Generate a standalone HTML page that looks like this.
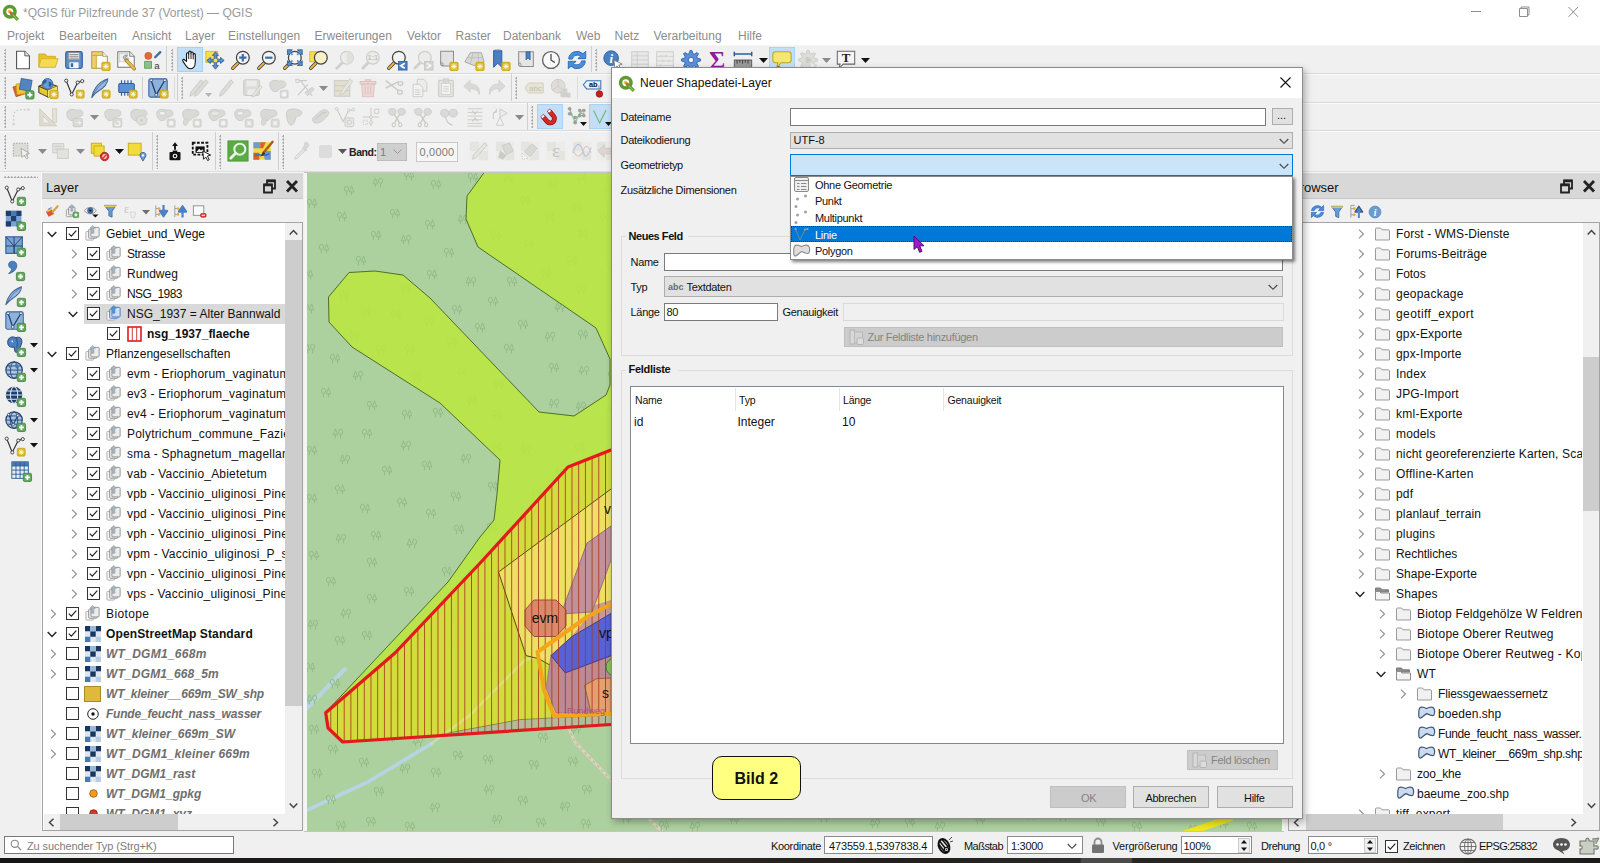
<!DOCTYPE html><html lang="de"><head><meta charset="utf-8"><title>QGIS für Pilzfreunde 37 (Vortest) — QGIS</title><style>
*{box-sizing:border-box}
html,body{margin:0;padding:0}
body{width:1600px;height:863px;overflow:hidden;background:#f0f0f0;position:relative;font-family:"Liberation Sans",sans-serif;font-size:12px;color:#111}
.b{position:absolute}
.t{position:absolute;white-space:nowrap}
.ic{position:absolute;overflow:visible}
.menu{color:#8c8c8c}
.bi{font-weight:bold;font-style:italic;color:#6e6e6e}
.bd{font-weight:bold}
.d11{font-size:11px;letter-spacing:-.3px}
.inp{background:#fff;border:1px solid #7a7a7a}
.cmb{background:#e1e1e1;border:1px solid #adadad}
.btn{background:#e1e1e1;border:1px solid #adadad;text-align:center}
.btnd{background:#cccccc;border:1px solid #bfbfbf;text-align:center;color:#838383}
.sep{position:absolute;width:1px;background:#cfcfcf}
.clip{position:absolute;overflow:hidden}
</style></head><body>
<div class="b " style="left:0px;top:0px;width:1600px;height:45px;background:#fff"></div>
<svg class="ic" style="left:2px;top:4px" width="17" height="17" viewBox="0 0 24 24"><circle cx="11" cy="11" r="7.4" fill="none" stroke="#5d9a33" stroke-width="5"/><path d="M12 12L22.5 22.5" stroke="#5d9a33" stroke-width="4.6"/><path d="M12.5 12.5L22 22" stroke="#8fc457" stroke-width="1.6"/><circle cx="10.5" cy="10.5" r="2.4" fill="#f0b73a"/><path d="M11 11L15 15" stroke="#e0562c" stroke-width="2"/></svg>
<div class="t " style="left:23px;top:2.7px;height:20px;line-height:20px;color:#9a9a9a">*QGIS für Pilzfreunde 37 (Vortest) — QGIS</div>
<svg class="ic" style="left:1460px;top:0" width="140" height="26" viewBox="0 0 140 26"><path d="M11 11.500H21M59.500 8.500V16.500H67.500V8.500ZM61 8.500V7H69V15H67.500M108.500 7L118 16.800M118 7L108.500 16.800" fill="none" stroke="#8e8e8e" stroke-width="1"/></svg>
<div class="t menu" style="left:7px;top:25.5px;height:20px;line-height:20px;">Projekt</div>
<div class="t menu" style="left:59px;top:25.5px;height:20px;line-height:20px;">Bearbeiten</div>
<div class="t menu" style="left:132px;top:25.5px;height:20px;line-height:20px;">Ansicht</div>
<div class="t menu" style="left:185px;top:25.5px;height:20px;line-height:20px;">Layer</div>
<div class="t menu" style="left:228px;top:25.5px;height:20px;line-height:20px;">Einstellungen</div>
<div class="t menu" style="left:314.5px;top:25.5px;height:20px;line-height:20px;">Erweiterungen</div>
<div class="t menu" style="left:407px;top:25.5px;height:20px;line-height:20px;">Vektor</div>
<div class="t menu" style="left:455.5px;top:25.5px;height:20px;line-height:20px;">Raster</div>
<div class="t menu" style="left:503px;top:25.5px;height:20px;line-height:20px;">Datenbank</div>
<div class="t menu" style="left:576px;top:25.5px;height:20px;line-height:20px;">Web</div>
<div class="t menu" style="left:614.5px;top:25.5px;height:20px;line-height:20px;">Netz</div>
<div class="t menu" style="left:653.5px;top:25.5px;height:20px;line-height:20px;">Verarbeitung</div>
<div class="t menu" style="left:738px;top:25.5px;height:20px;line-height:20px;">Hilfe</div>
<div class="b " style="left:0px;top:73px;width:1600px;height:1px;background:#d9d9d9"></div>
<div class="b " style="left:0px;top:74px;width:1600px;height:1px;background:#fbfbfb"></div>
<div class="b " style="left:0px;top:101.5px;width:1600px;height:1px;background:#d9d9d9"></div>
<div class="b " style="left:0px;top:102.5px;width:1600px;height:1px;background:#fbfbfb"></div>
<div class="b " style="left:0px;top:130px;width:1600px;height:1px;background:#d9d9d9"></div>
<div class="b " style="left:0px;top:131px;width:1600px;height:1px;background:#fbfbfb"></div>
<div class="b " style="left:0px;top:170.5px;width:1600px;height:1px;background:#dcdcdc"></div>
<div class="b " style="left:0px;top:171.5px;width:1600px;height:1px;background:#f8f8f8"></div>
<div class="b " style="left:0px;top:45px;width:1600px;height:1px;background:#f6f6f6"></div>
<div class="b hd" style="left:3px;top:49px;width:4px;height:22px;background-image:radial-gradient(circle at 2.300px 1.200px,#a4a4a4 0.8px,transparent 1.15px);background-size:4px 3.300px"></div>
<svg class="ic" style="left:11.5px;top:49px;" width="22" height="22" viewBox="0 0 24 24"><path d="M5 2.5H14L19 7.5V21.5H5Z" fill="#fff" stroke="#555" stroke-width="1.2"/><path d="M14 2.5V7.5H19" fill="#e4e4e4" stroke="#555" stroke-width="1"/></svg>
<svg class="ic" style="left:37px;top:49px;" width="22" height="22" viewBox="0 0 24 24"><path d="M2 5.5H9L11 8H20V19.5H2Z" fill="#e9c32f" stroke="#d1a91a" stroke-width="1"/><path d="M4.5 10.5H23L20 20H2Z" fill="#f6d953" stroke="#dcb525" stroke-width="1"/></svg>
<svg class="ic" style="left:63px;top:49px;" width="22" height="22" viewBox="0 0 24 24"><rect x="3" y="3" width="18" height="18" rx="2" fill="#5f8fc6" stroke="#38669c" stroke-width="1.4"/><rect x="6" y="4" width="12" height="7.5" fill="#e8e8e8" stroke="#8a8a8a" stroke-width=".6"/><path d="M7 6H17M7 8H17M7 10H17" stroke="#777" stroke-width=".8"/><rect x="7" y="14.5" width="10" height="6.5" fill="#f4f4f4"/><rect x="8.5" y="15.5" width="2.6" height="4.2" fill="#38669c"/></svg>
<svg class="ic" style="left:89px;top:49px;" width="22" height="22" viewBox="0 0 24 24"><path d="M3 3H15L20 8V21H3Z" fill="#fbfbf6" stroke="#9a8a55" stroke-width="1"/><path d="M3 3H8V21H3Z" fill="#ecd070" stroke="#c7a633" stroke-width="1"/><path d="M3 3H15V7H3Z" fill="#ecd070" stroke="#c7a633" stroke-width="1"/><path d="M15 3V8H20" fill="#eee" stroke="#9a8a55" stroke-width=".8"/><g transform="translate(14,14.5)"><rect width="9" height="9" rx="1.2" fill="#dcbc2a" stroke="#c9a91a" stroke-width="1"/><path d="M4.5 1.4V7.6M1.4 4.5H7.6M2.2 2.2L6.8 6.8M6.8 2.2L2.2 6.8" stroke="#fffdf0" stroke-width="1" fill="none"/></g></svg>
<svg class="ic" style="left:115px;top:49px;" width="22" height="22" viewBox="0 0 24 24"><path d="M3 3H16L21 8V20H3Z" fill="#fbfbfb" stroke="#777" stroke-width="1.1"/><path d="M16 3V8H21" fill="#e6e6e6" stroke="#777" stroke-width=".9"/><rect x="5" y="5" width="9" height="9" fill="#f0f0f0" stroke="#bbb" stroke-width=".6"/><path d="M9 9.5A3 3 0 0 1 13.5 7L11.6 9L12.6 11L14.8 10.6A3 3 0 0 1 11.4 13L9 9.5Z" fill="#bdbdbd" stroke="#777" stroke-width=".7"/><path d="M12.5 12.5L21 21.5" stroke="#b08a2a" stroke-width="4" stroke-linecap="round"/><path d="M13 13L20.8 21.2" stroke="#e6c04f" stroke-width="2.2" stroke-linecap="round"/></svg>
<svg class="ic" style="left:141px;top:49px;" width="22" height="22" viewBox="0 0 24 24"><circle cx="8" cy="7.500" r="3.900" fill="#e06a38" stroke="#c8552a" stroke-width=".6"/><rect x="4" y="13.500" width="7.500" height="7.500" fill="#8cc08a" stroke="#5a9a58" stroke-width=".9"/><path d="M15.5 9L21 3.5" stroke="#3c6fa8" stroke-width="2.6" stroke-linecap="round"/><text x="14.5" y="21.5" font-family="Liberation Sans,sans-serif" font-size="10.5" fill="#333">a</text></svg>
<div class="sep" style="left:166px;top:46px;height:26px"></div>
<div class="b hd" style="left:170px;top:49px;width:4px;height:22px;background-image:radial-gradient(circle at 2.300px 1.200px,#a4a4a4 0.8px,transparent 1.15px);background-size:4px 3.300px"></div>
<div class="b " style="left:177px;top:47px;width:26px;height:25px;background:#c4dff5;border:1px solid #a9d1f2"></div>
<svg class="ic" style="left:179px;top:49px;" width="22" height="22" viewBox="0 0 24 24"><path d="M8.2 13.5V5.6C8.2 3.6 10.6 3.6 10.6 5.6V3.8C10.6 1.8 13.1 1.8 13.1 3.8V4.6C13.1 2.8 15.5 2.8 15.5 4.8V6.2C15.5 4.6 17.8 4.6 17.8 6.6V14C17.8 18 16 21.5 12.6 21.5C9.6 21.5 8.4 19.8 6.8 17.2L4.2 13.2C3.4 11.6 5.2 10.6 6.4 12.1Z" fill="#fff" stroke="#111" stroke-width="1.2" stroke-linejoin="round"/><path d="M10.6 5.6V11M13.1 4.6V11M15.5 6.2V11.3" stroke="#111" stroke-width="1" fill="none"/></svg>
<svg class="ic" style="left:204px;top:49px;" width="22" height="22" viewBox="0 0 24 24"><rect x="2" y="2.500" width="13" height="12" fill="#f2e04c" stroke="#c9b21a" stroke-width=".8"/><path d="M12.500 3L15.800 7H13.800V11.200H18V9.200L22 12.500L18 15.800V13.800H13.800V18H15.800L12.500 22L9.200 18H11.200V13.800H7V15.800L3 12.500L7 9.200V11.200H11.200V7H9.200Z" fill="#5b8fce" stroke="#2d5d99" stroke-width=".9" stroke-linejoin="round"/><rect x="10.700" y="10.700" width="3.600" height="3.600" fill="#f2e04c"/></svg>
<svg class="ic" style="left:230px;top:49px;" width="22" height="22" viewBox="0 0 24 24"><path d="M3 21L9.5 14.5" stroke="#3a3a3a" stroke-width="3.6" stroke-linecap="round"/><path d="M3 21L9 15" stroke="#e8b83a" stroke-width="2" stroke-linecap="round"/><circle cx="14" cy="9.5" r="7" fill="#f4f4f4" stroke="#444" stroke-width="1.4"/><path d="M14 5.5V13.5M10 9.5H18" stroke="#3b6fb0" stroke-width="2.4"/></svg>
<svg class="ic" style="left:256px;top:49px;" width="22" height="22" viewBox="0 0 24 24"><path d="M3 21L9.5 14.5" stroke="#3a3a3a" stroke-width="3.6" stroke-linecap="round"/><path d="M3 21L9 15" stroke="#e8b83a" stroke-width="2" stroke-linecap="round"/><circle cx="14" cy="9.5" r="7" fill="#f4f4f4" stroke="#444" stroke-width="1.4"/><path d="M10 9.5H18" stroke="#3b6fb0" stroke-width="2.4"/></svg>
<svg class="ic" style="left:282px;top:49px;" width="22" height="22" viewBox="0 0 24 24"><path d="M3 21L9.5 14.5" stroke="#3a3a3a" stroke-width="3.6" stroke-linecap="round"/><path d="M3 21L9 15" stroke="#e8b83a" stroke-width="2" stroke-linecap="round"/><circle cx="14" cy="9.5" r="7" fill="#f4f4f4" stroke="#444" stroke-width="1.4"/><path d="M6 1H11L6 6ZM22 1H17L22 6ZM6 18H11L6 13ZM22 18H17L22 13Z" fill="#5b8fce" stroke="#3a6fb0" stroke-width="1.2" stroke-linejoin="round"/><path d="M7 2L11.5 6.5M21 2L16.5 6.5M7 17L11.5 12.5M21 17L16.5 12.5" stroke="#5b8fce" stroke-width="1.8"/></svg>
<svg class="ic" style="left:308px;top:49px;" width="22" height="22" viewBox="0 0 24 24"><rect x="2" y="3" width="9" height="11" fill="#f2e04c" stroke="#c9b21a" stroke-width=".8"/><path d="M3 21L9.5 14.5" stroke="#3a3a3a" stroke-width="3.6" stroke-linecap="round"/><path d="M3 21L9 15" stroke="#e8b83a" stroke-width="2" stroke-linecap="round"/><circle cx="14" cy="9.5" r="7" fill="#f7f1c8" stroke="#444" stroke-width="1.4"/></svg>
<svg class="ic" style="left:334px;top:49px;" width="22" height="22" viewBox="0 0 24 24"><path d="M3 21L9.5 14.5" stroke="#cfcfcb" stroke-width="3" stroke-linecap="round"/><circle cx="14" cy="9.5" r="7" fill="#ececea" stroke="#cfcfcb" stroke-width="1.4"/><path d="M14 2.5A7 7 0 0 1 14 16.5Z" fill="#e0e0dc"/></svg>
<svg class="ic" style="left:360px;top:49px;" width="22" height="22" viewBox="0 0 24 24"><path d="M3 21L9.5 14.5" stroke="#cfcfcb" stroke-width="3" stroke-linecap="round"/><circle cx="14" cy="9.5" r="7" fill="#ececea" stroke="#cfcfcb" stroke-width="1.4"/><text x="14" y="12.5" text-anchor="middle" font-family="Liberation Sans,sans-serif" font-size="8" font-weight="bold" fill="#c4c4c0">1:1</text></svg>
<svg class="ic" style="left:386px;top:49px;" width="22" height="22" viewBox="0 0 24 24"><path d="M3 21L9.5 14.5" stroke="#3a3a3a" stroke-width="3.6" stroke-linecap="round"/><path d="M3 21L9 15" stroke="#e8b83a" stroke-width="2" stroke-linecap="round"/><circle cx="14" cy="9.5" r="7" fill="#f4f4f4" stroke="#444" stroke-width="1.4"/><rect x="13.5" y="13.5" width="9.5" height="9.5" fill="#4a7fc1" stroke="#2d5d99" stroke-width=".8"/><path d="M20.5 15.5L16 18.2L20.5 21" stroke="#fff" stroke-width="1.8" fill="none"/></svg>
<svg class="ic" style="left:412px;top:49px;" width="22" height="22" viewBox="0 0 24 24"><path d="M3 21L9.5 14.5" stroke="#cfcfcb" stroke-width="3" stroke-linecap="round"/><circle cx="14" cy="9.5" r="7" fill="#ececea" stroke="#cfcfcb" stroke-width="1.4"/><rect x="13.5" y="13.5" width="9.5" height="9.5" fill="#d4d4d0" stroke="#c4c4c0" stroke-width=".8"/><path d="M16 15.5L20.5 18.2L16 21" stroke="#f4f4f4" stroke-width="1.8" fill="none"/></svg>
<svg class="ic" style="left:437px;top:49px;" width="22" height="22" viewBox="0 0 24 24"><path d="M4 2.5H18V18.5H6.5C5 18.5 4 17.6 4 16Z" fill="#e2e2e0" stroke="#8c8c8a" stroke-width="1.1"/><path d="M4 16C4 14.6 6.5 14.6 6.5 16V18.5" fill="none" stroke="#8c8c8a" stroke-width="1"/><g transform="translate(14,14.5)"><rect width="9" height="9" rx="1.2" fill="#dcbc2a" stroke="#c9a91a" stroke-width="1"/><path d="M4.5 1.4V7.6M1.4 4.5H7.6M2.2 2.2L6.8 6.8M6.8 2.2L2.2 6.8" stroke="#fffdf0" stroke-width="1" fill="none"/></g></svg>
<svg class="ic" style="left:463px;top:49px;" width="22" height="22" viewBox="0 0 24 24"><path d="M2 14L8 4H20L23 14L12 18Z" fill="#d9d9d6" stroke="#a4a4a0" stroke-width="1"/><path d="M5 9.5H21.5M11 4L8 16.5M16 4L17.5 16" stroke="#b8b8b4" stroke-width=".8" fill="none"/><g transform="translate(14,14.5)"><rect width="9" height="9" rx="1.2" fill="#dcbc2a" stroke="#c9a91a" stroke-width="1"/><path d="M4.5 1.4V7.6M1.4 4.5H7.6M2.2 2.2L6.8 6.8M6.8 2.2L2.2 6.8" stroke="#fffdf0" stroke-width="1" fill="none"/></g></svg>
<svg class="ic" style="left:489px;top:49px;" width="22" height="22" viewBox="0 0 24 24"><path d="M5 2H14V20L9.5 15.5L5 20Z" fill="#4a7fc1" stroke="#2d5d99" stroke-width="1"/><path d="M5 2C5 .8 14 .8 14 2" fill="#8ab0dc" stroke="#2d5d99" stroke-width=".8"/><g transform="translate(14,14.5)"><rect width="9" height="9" rx="1.2" fill="#dcbc2a" stroke="#c9a91a" stroke-width="1"/><path d="M4.5 1.4V7.6M1.4 4.5H7.6M2.2 2.2L6.8 6.8M6.8 2.2L2.2 6.8" stroke="#fffdf0" stroke-width="1" fill="none"/></g></svg>
<svg class="ic" style="left:515px;top:49px;" width="22" height="22" viewBox="0 0 24 24"><path d="M4 3H20V19H6.5C5 19 4 18 4 16.5Z" fill="#e6e6e4" stroke="#8c8c8a" stroke-width="1.1"/><path d="M4 16.5C4 15 6.5 15 6.5 16.5V19" fill="none" stroke="#8c8c8a" stroke-width="1"/><path d="M12 3H16.5V12L14.2 9.8L12 12Z" fill="#4a7fc1" stroke="#2d5d99" stroke-width=".8"/></svg>
<svg class="ic" style="left:540px;top:49px;" width="22" height="22" viewBox="0 0 24 24"><circle cx="12" cy="12" r="9.2" fill="#fafafa" stroke="#666" stroke-width="1.5"/><path d="M12 5.5V12L16.2 14.8" stroke="#555" stroke-width="1.5" fill="none"/></svg>
<svg class="ic" style="left:566px;top:49px;" width="22" height="22" viewBox="0 0 24 24"><path d="M3 11A9 8.5 0 0 1 18.5 5.2L21.5 2.5V10.5H13L16 7.8A5.6 5.2 0 0 0 7 11Z" fill="#4a8fdc" stroke="#2565b5" stroke-width="1"/><path d="M21 13A9 8.5 0 0 1 5.5 18.8L2.5 21.5V13.5H11L8 16.2A5.6 5.2 0 0 0 17 13Z" fill="#4a8fdc" stroke="#2565b5" stroke-width="1"/></svg>
<div class="sep" style="left:591px;top:46px;height:26px"></div>
<div class="b hd" style="left:594px;top:49px;width:4px;height:22px;background-image:radial-gradient(circle at 2.300px 1.200px,#a4a4a4 0.8px,transparent 1.15px);background-size:4px 3.300px"></div>
<div class="b " style="left:769px;top:47px;width:26px;height:25px;background:#c4dff5;border:1px solid #a9d1f2"></div>
<svg class="ic" style="left:602px;top:49px;" width="22" height="22" viewBox="0 0 24 24"><circle cx="10" cy="10" r="8" fill="#4a7fc1" stroke="#2d5d99" stroke-width="1"/><text x="10" y="15" text-anchor="middle" font-family="Liberation Serif,serif" font-style="italic" font-weight="bold" font-size="14" fill="#fff">i</text><path d="M13 12L22 16.5L18.3 17.6L20.5 21.5L18.6 22.5L16.5 18.6L14 21.2Z" fill="#fff" stroke="#666" stroke-width=".8"/></svg>
<svg class="ic" style="left:629px;top:49px;" width="22" height="22" viewBox="0 0 24 24"><rect x="3" y="3" width="18" height="18" fill="#e8e8e6" stroke="#cacac7" stroke-width="1"/><path d="M3 7.5H21M3 12H21M3 16.5H21M9 3V21" stroke="#cacac7" stroke-width="1"/></svg>
<svg class="ic" style="left:654px;top:49px;" width="22" height="22" viewBox="0 0 24 24"><rect x="3" y="3" width="18" height="18" fill="#ececea" stroke="#cacac7" stroke-width="1"/><path d="M3 8H21M3 13H21M3 18H21" stroke="#cacac7" stroke-width=".8"/><circle cx="8" cy="8" r="1.6" fill="#d9d9d6"/><circle cx="13" cy="8" r="1.6" fill="#d9d9d6"/><circle cx="10" cy="13" r="1.6" fill="#d9d9d6"/><circle cx="16" cy="13" r="1.6" fill="#d9d9d6"/><circle cx="7" cy="18" r="1.6" fill="#d9d9d6"/></svg>
<svg class="ic" style="left:680px;top:49px;" width="22" height="22" viewBox="0 0 24 24"><path d="M22.4 11.0L22.4 13.0L18.9 14.1L18.3 15.4L20.1 18.7L18.7 20.1L15.4 18.3L14.1 18.9L13.0 22.4L11.0 22.4L9.9 18.9L8.6 18.3L5.3 20.1L3.9 18.7L5.7 15.4L5.1 14.1L1.6 13.0L1.6 11.0L5.1 9.9L5.7 8.6L3.9 5.3L5.3 3.9L8.6 5.7L9.9 5.1L11.0 1.6L13.0 1.6L14.1 5.1L15.4 5.7L18.7 3.9L20.1 5.3L18.3 8.6L18.9 9.9Z" fill="#5b8fd6" stroke="#2f62ad" stroke-width="1" stroke-linejoin="round"/><circle cx="12" cy="12" r="3" fill="#f0f0f0" stroke="#2f62ad" stroke-width="1"/></svg>
<svg class="ic" style="left:706px;top:49px;" width="22" height="22" viewBox="0 0 24 24"><text x="12" y="21.5" text-anchor="middle" font-family="Liberation Serif,serif" font-weight="bold" font-size="27" fill="#8f1a96">Σ</text></svg>
<svg class="ic" style="left:732px;top:49px;" width="22" height="22" viewBox="0 0 24 24"><path d="M2.5 5.5H21.5M2.5 3V8M21.5 3V8" stroke="#2d5d99" stroke-width="1.6" fill="none"/><rect x="2.5" y="12" width="19" height="8.5" fill="#9a9a98" stroke="#555" stroke-width="1"/><path d="M5.5 12V16M8.5 12V15M11.5 12V16M14.5 12V15M17.5 12V16" stroke="#333" stroke-width=".9"/></svg>
<svg class="ic" style="left:771px;top:49px;" width="22" height="22" viewBox="0 0 24 24"><path d="M5 3H19C21 3 22 4.2 22 6V12C22 13.8 21 15 19 15H11L6 20.5L7.5 15H5C3 15 2 13.8 2 12V6C2 4.2 3 3 5 3Z" fill="#f5e66e" stroke="#b9a526" stroke-width="1.1"/><path d="M5.5 22C6 19.5 8.5 18.6 10 20" stroke="#5a8a3a" stroke-width="1.6" fill="none"/></svg>
<svg class="ic" style="left:797px;top:49px;" width="22" height="22" viewBox="0 0 24 24"><path d="M22.4 11.0L22.4 13.0L18.9 14.1L18.3 15.4L20.1 18.7L18.7 20.1L15.4 18.3L14.1 18.9L13.0 22.4L11.0 22.4L9.9 18.9L8.6 18.3L5.3 20.1L3.9 18.7L5.7 15.4L5.1 14.1L1.6 13.0L1.6 11.0L5.1 9.9L5.7 8.6L3.9 5.3L5.3 3.9L8.6 5.7L9.9 5.1L11.0 1.6L13.0 1.6L14.1 5.1L15.4 5.7L18.7 3.9L20.1 5.3L18.3 8.6L18.9 9.9Z" fill="#dcdcd8" stroke="#cacac6" stroke-width="1" stroke-linejoin="round"/><circle cx="12" cy="12" r="3" fill="#f0f0f0" stroke="#cacac6" stroke-width="1"/><path d="M10 8.5L16 12L10 15.5Z" fill="#c8c8c4"/><path d="M14 14L22 18L18.5 19L20.5 22.5L19 23.2L17 19.8L14.8 22Z" fill="#eee" stroke="#cacac7" stroke-width=".7"/></svg>
<svg class="ic" style="left:835px;top:49px;" width="22" height="22" viewBox="0 0 24 24"><path d="M2.5 2.5H21.5V16.5H9L4.5 21L5.5 16.5H2.5Z" fill="#f4f4f4" stroke="#666" stroke-width="1.1"/><text x="12" y="14.3" text-anchor="middle" font-family="Liberation Serif,serif" font-weight="bold" font-size="14" fill="#222">T</text></svg>
<svg class="ic" style="left:758.5px;top:57.5px" width="9" height="5" viewBox="0 0 9 5"><path d="M0 0H9L4.5 5Z" fill="#111"/></svg>
<svg class="ic" style="left:821.5px;top:57.5px" width="9" height="5" viewBox="0 0 9 5"><path d="M0 0H9L4.5 5Z" fill="#8a8a8a"/></svg>
<svg class="ic" style="left:860.5px;top:57.5px" width="9" height="5" viewBox="0 0 9 5"><path d="M0 0H9L4.5 5Z" fill="#111"/></svg>
<div class="b hd" style="left:3px;top:77px;width:4px;height:22px;background-image:radial-gradient(circle at 2.300px 1.200px,#a4a4a4 0.8px,transparent 1.15px);background-size:4px 3.300px"></div>
<svg class="ic" style="left:12px;top:77px;" width="22" height="22" viewBox="0 0 24 24"><rect x="2.5" y="9" width="11" height="11" fill="#d9652b" stroke="#b14d1b" stroke-width=".8" transform="rotate(-18 8 14.5)"/><rect x="5" y="7" width="11.5" height="11.5" fill="#f0c33a" stroke="#c9a01c" stroke-width=".8" transform="rotate(-6 11 13)"/><rect x="9" y="2.5" width="12" height="12" fill="#5284c2" stroke="#2d5d99" stroke-width=".8" transform="rotate(10 15 8.5)"/><g transform="translate(15.0,15.0)"><rect width="9" height="9" rx="1.5" fill="#64a75f" stroke="#4a8a46" stroke-width="1"/><path d="M4.5 1.8V7.2M1.8 4.5H7.2" stroke="#fff" stroke-width="2" fill="none"/></g></svg>
<svg class="ic" style="left:37px;top:77px;" width="22" height="22" viewBox="0 0 24 24"><path d="M2 10L11 6L22 10V17L12 22L2 17Z" fill="#e6c82f" stroke="#3a3a3a" stroke-width="1.1" stroke-linejoin="round"/><path d="M2 10L12 14.5L22 10M12 14.5V22" fill="none" stroke="#3a3a3a" stroke-width="1.1"/><path d="M12 14.5L22 10V17L12 22Z" fill="#f6e46a"/><circle cx="11.5" cy="7.5" r="5.8" fill="#6c9bd2" stroke="#2d5d99" stroke-width="1"/><path d="M7 4C9 2.500 11 3 10.500 5C10 7 8 6.500 7.500 8.500C6.500 8 6 5.500 7 4ZM12.500 5.500C14 4.500 16.500 5.500 16 8C15.500 10 14 11.500 13 10.500C12.500 9 13.500 8 12.500 5.500Z" fill="#2d5d99"/><g transform="translate(14,14.5)"><rect width="9" height="9" rx="1.2" fill="#dcbc2a" stroke="#c9a91a" stroke-width="1"/><path d="M4.5 1.4V7.6M1.4 4.5H7.6M2.2 2.2L6.8 6.8M6.8 2.2L2.2 6.8" stroke="#fffdf0" stroke-width="1" fill="none"/></g></svg>
<svg class="ic" style="left:63px;top:77px;" width="22" height="22" viewBox="0 0 24 24"><path d="M3.5 4L9.5 19L16 6L21 4.5" fill="none" stroke="#333" stroke-width="1.3"/><circle cx="3.5" cy="4" r="1.7" fill="#fff" stroke="#333" stroke-width="1"/><circle cx="9.5" cy="19" r="1.7" fill="#fff" stroke="#333" stroke-width="1"/><circle cx="16" cy="6" r="1.7" fill="#fff" stroke="#333" stroke-width="1"/><circle cx="21" cy="4.5" r="1.7" fill="#fff" stroke="#333" stroke-width="1"/><g transform="translate(14.5,14.5)"><rect width="8.5" height="8.5" rx="1.2" fill="#dcbc2a" stroke="#c9a91a" stroke-width="1"/><path d="M4.25 1.4V7.1M1.4 4.25H7.1M2.2 2.2L6.3 6.3M6.3 2.2L2.2 6.3" stroke="#fffdf0" stroke-width="1" fill="none"/></g></svg>
<svg class="ic" style="left:89px;top:77px;" width="22" height="22" viewBox="0 0 24 24"><path d="M3 22.500C4 15 9 6 20.500 2C20.500 6 18 11 10 15.500C8 16.500 6 18 3 22.500Z" fill="#9bb9de" stroke="#3d6495" stroke-width="1.100" stroke-linejoin="round"/><path d="M3.500 21.500C7 14 12 8 19.500 3" stroke="#3d6495" stroke-width=".8" fill="none"/><g transform="translate(14.5,14.5)"><rect width="8.5" height="8.5" rx="1.2" fill="#dcbc2a" stroke="#c9a91a" stroke-width="1"/><path d="M4.25 1.4V7.1M1.4 4.25H7.1M2.2 2.2L6.3 6.3M6.3 2.2L2.2 6.3" stroke="#fffdf0" stroke-width="1" fill="none"/></g></svg>
<svg class="ic" style="left:116px;top:77px;" width="22" height="22" viewBox="0 0 24 24"><rect x="3" y="7" width="17" height="10" rx="1.5" fill="#5b8fd6" stroke="#2d5d99" stroke-width="1.1"/><path d="M6 7V3.5M9.5 7V3.5M13 7V3.5M16.5 7V3.5M6 17V20.5M9.5 17V20.5M13 17V20.5" stroke="#2d5d99" stroke-width="1.3"/><g transform="translate(14.5,14.5)"><rect width="8.5" height="8.5" rx="1.2" fill="#dcbc2a" stroke="#c9a91a" stroke-width="1"/><path d="M4.25 1.4V7.1M1.4 4.25H7.1M2.2 2.2L6.3 6.3M6.3 2.2L2.2 6.3" stroke="#fffdf0" stroke-width="1" fill="none"/></g></svg>
<svg class="ic" style="left:147px;top:77px;" width="22" height="22" viewBox="0 0 24 24"><rect x="2" y="2" width="20" height="20" rx="2" fill="#8fb2dc" stroke="#3a6aa6" stroke-width="1.2"/><path d="M4.5 3.5L10 19.5L19.5 3.5" fill="none" stroke="#1f3f6a" stroke-width="1.4"/><circle cx="4.5" cy="3.5" r="1.5" fill="#fff" stroke="#1f3f6a" stroke-width=".8"/><circle cx="10" cy="19.5" r="1.5" fill="#fff" stroke="#1f3f6a" stroke-width=".8"/><circle cx="19.5" cy="3.5" r="1.5" fill="#fff" stroke="#1f3f6a" stroke-width=".8"/><g transform="translate(14.5,14.5)"><rect width="8.5" height="8.5" rx="1.2" fill="#dcbc2a" stroke="#c9a91a" stroke-width="1"/><path d="M4.25 1.4V7.1M1.4 4.25H7.1M2.2 2.2L6.3 6.3M6.3 2.2L2.2 6.3" stroke="#fffdf0" stroke-width="1" fill="none"/></g></svg>
<div class="sep" style="left:142px;top:77px;height:22px"></div>
<div class="sep" style="left:174px;top:77px;height:22px;background:#dcdcdc"></div>
<div class="sep" style="left:177px;top:74px;height:27px"></div>
<div class="b hd" style="left:180px;top:77px;width:4px;height:22px;background-image:radial-gradient(circle at 2.300px 1.200px,#a4a4a4 0.8px,transparent 1.15px);background-size:4px 3.300px"></div>
<svg class="ic" style="left:189px;top:77px;" width="22" height="22" viewBox="0 0 24 24"><path d="M13 3L16 5.5L5 19L1 21L2 16.5Z" fill="#dcdcd8" stroke="#cacac7" stroke-width="1" stroke-linejoin="round"/><path d="M18 3L21 5.5L10 19L6 21L7 16.5Z" fill="#dcdcd8" stroke="#cacac7" stroke-width="1" stroke-linejoin="round"/></svg>
<svg class="ic" style="left:215px;top:77px;" width="22" height="22" viewBox="0 0 24 24"><path d="M17 3L20 5.5L9 19L5 21L6 16.5Z" fill="#dcdcd8" stroke="#cacac7" stroke-width="1" stroke-linejoin="round"/></svg>
<svg class="ic" style="left:241px;top:77px;" width="22" height="22" viewBox="0 0 24 24"><rect x="3" y="3" width="17" height="17" rx="2" fill="#dcdcd8" stroke="#cacac7" stroke-width="1.2"/><rect x="6" y="4" width="11" height="6" fill="#ececea"/><rect x="7" y="13.5" width="9" height="6" fill="#ececea"/><path d="M21 9L23 11L15 21L12 22L13 19Z" fill="#e4e4e0" stroke="#cacac7" stroke-width=".9"/></svg>
<svg class="ic" style="left:267px;top:77px;" width="22" height="22" viewBox="0 0 24 24"><path d="M4 9C4 5 9 4 12 5C15 6 19 4 21 7C23 10 20 13 17 13C14 13 14 17 10 17C6 17 4 13 4 9Z" fill="#d9d9d6" stroke="#cacac7" stroke-width="1" transform="translate(-1,-1)"/><g transform="translate(14.5,14.5)"><rect width="8.5" height="8.5" rx="1.2" fill="#d9d9d6" stroke="#cfcfcc" stroke-width="1"/><path d="M4.25 1.6V6.9M1.6 4.25H6.9M2.3 2.3L6.2 6.2M6.2 2.3L2.3 6.2" stroke="#f4f4f4" stroke-width="1.3" fill="none"/></g></svg>
<svg class="ic" style="left:294px;top:77px;" width="22" height="22" viewBox="0 0 24 24"><path d="M3 4H14M7 4L20 21M4 20L15 8" stroke="#cacac7" stroke-width="1.3" fill="none"/><rect x="2" y="2.5" width="3.4" height="3.4" fill="#eee" stroke="#cacac7" stroke-width=".9"/><path d="M12 17L20 11L22 13.5L15 20.5Z" fill="#d9d9d6" stroke="#cacac7" stroke-width=".8"/></svg>
<svg class="ic" style="left:332px;top:77px;" width="22" height="22" viewBox="0 0 24 24"><rect x="2.5" y="4" width="17" height="17" fill="#e2dfcf" stroke="#cacac7" stroke-width="1"/><path d="M2.5 9.5H19.5M2.5 15H19.5" stroke="#cfcbb8" stroke-width="1.1"/><path d="M19.5 2L22.5 4.5L12.5 18L9 19.5L10 16Z" fill="#e6e6e2" stroke="#cacac7" stroke-width=".9"/></svg>
<svg class="ic" style="left:357px;top:77px;" width="22" height="22" viewBox="0 0 24 24"><path d="M5 7.5H19L17.8 21.5H6.2Z" fill="#ecd9d6" stroke="#dcc2be" stroke-width="1.1"/><path d="M3.5 5H20.5V7.5H3.5ZM9 5V3H15V5" fill="#ecd9d6" stroke="#dcc2be" stroke-width="1.1"/><path d="M9 10V19M12 10V19M15 10V19" stroke="#dcc2be" stroke-width="1.1"/></svg>
<svg class="ic" style="left:383px;top:77px;" width="22" height="22" viewBox="0 0 24 24"><path d="M3 4L17 15M3 12L17 5" stroke="#cacac7" stroke-width="1.6" fill="none"/><ellipse cx="19" cy="7" rx="2.6" ry="2" fill="none" stroke="#cacac7" stroke-width="1.4"/><ellipse cx="18.5" cy="16.5" rx="2.6" ry="2.2" fill="none" stroke="#cacac7" stroke-width="1.4"/></svg>
<svg class="ic" style="left:409px;top:77px;" width="22" height="22" viewBox="0 0 24 24"><path d="M9 2.5H16L19.5 6V15.5H9Z" fill="#ececea" stroke="#cacac7" stroke-width="1"/><path d="M4.5 8H11.5L15 11.5V21.5H4.5Z" fill="#f2f2f0" stroke="#cacac7" stroke-width="1"/><path d="M6.5 14H12.5M6.5 16.5H12.5M6.5 19H12.5" stroke="#cacac7" stroke-width=".9"/></svg>
<svg class="ic" style="left:435px;top:77px;" width="22" height="22" viewBox="0 0 24 24"><rect x="4" y="3.5" width="16" height="18" rx="1" fill="#e4e4e0" stroke="#cacac7" stroke-width="1.1"/><rect x="9" y="2" width="6" height="3.5" fill="#d8d8d4" stroke="#cacac7" stroke-width=".8"/><rect x="7" y="7" width="10" height="12" fill="#f4f4f2" stroke="#cacac7" stroke-width=".8"/><path d="M9 10.5H15M9 13H15M9 15.5H15" stroke="#cacac7" stroke-width=".9"/></svg>
<svg class="ic" style="left:461px;top:77px;" width="22" height="22" viewBox="0 0 24 24"><path d="M3 10L10 3.5V7.5C17 7.5 21 11 20 19C18.5 14.5 15.5 12.8 10 12.8V16.5Z" fill="#d9d9d5" stroke="#cdcdc9" stroke-width=".8" stroke-linejoin="round"/></svg>
<svg class="ic" style="left:486px;top:77px;" width="22" height="22" viewBox="0 0 24 24"><path d="M21 10L14 3.5V7.5C7 7.5 3 11 4 19C5.5 14.5 8.5 12.8 14 12.8V16.5Z" fill="#d9d9d5" stroke="#cdcdc9" stroke-width=".8" stroke-linejoin="round"/></svg>
<svg class="ic" style="left:204.5px;top:93px" width="7" height="4" viewBox="0 0 7 4"><path d="M0 0H7L3.5 4Z" fill="#b4b4b4"/></svg>
<svg class="ic" style="left:319px;top:85.5px" width="9" height="5" viewBox="0 0 9 5"><path d="M0 0H9L4.5 5Z" fill="#8a8a8a"/></svg>
<div class="sep" style="left:511px;top:74px;height:27px"></div>
<div class="b hd" style="left:514px;top:77px;width:4px;height:22px;background-image:radial-gradient(circle at 2.300px 1.200px,#a4a4a4 0.8px,transparent 1.15px);background-size:4px 3.300px"></div>
<svg class="ic" style="left:523px;top:77px;" width="22" height="22" viewBox="0 0 24 24"><path d="M2 12L6 6.5H22V17.5H6Z" fill="#e6e4d4" stroke="#d2cfba" stroke-width="1"/><text x="13.5" y="15" text-anchor="middle" font-family="Liberation Sans,sans-serif" font-size="8.5" fill="#c2c0b2">abc</text></svg>
<svg class="ic" style="left:549px;top:77px;" width="22" height="22" viewBox="0 0 24 24"><circle cx="10" cy="10" r="7.5" fill="#e0ddd8" stroke="#cacac7" stroke-width="1"/><path d="M10 10V2.5M10 10L16 14.5M10 10L4 14" stroke="#cacac7" stroke-width=".9"/><path d="M13 22V16H16V22M16.5 22V13H19.5V22M20 22V17.5H23V22Z" fill="#d2d2ce" stroke="#cacac7" stroke-width=".7"/></svg>
<svg class="ic" style="left:581.5px;top:77px;" width="22" height="22" viewBox="0 0 24 24"><path d="M1.5 8.5L5 4H20.5V13H5Z" fill="#e8f0fb" stroke="#3a6fb5" stroke-width="1.1"/><text x="12.3" y="11.4" text-anchor="middle" font-family="Liberation Sans,sans-serif" font-weight="bold" font-size="8" fill="#111">ab</text><path d="M18.5 9V17" stroke="#888" stroke-width="1"/><circle cx="19" cy="18.5" r="3.6" fill="#c81e1e" stroke="#8f1010" stroke-width=".7"/></svg>
<div class="sep" style="left:577px;top:77px;height:22px;background:#dcdcdc"></div>
<div class="b hd" style="left:3px;top:106px;width:4px;height:22px;background-image:radial-gradient(circle at 2.300px 1.200px,#a4a4a4 0.8px,transparent 1.15px);background-size:4px 3.300px"></div>
<svg class="ic" style="left:10px;top:106px;" width="22" height="22" viewBox="0 0 24 24"><path d="M4 20V11C4 6 7 4 12 4H20" fill="none" stroke="#cacac7" stroke-width="1.2" stroke-dasharray="2 2"/><circle cx="4" cy="20" r="1.6" fill="#d9d9d6"/><circle cx="20" cy="4" r="1.6" fill="#d9d9d6"/></svg>
<svg class="ic" style="left:37px;top:106px;" width="22" height="22" viewBox="0 0 24 24"><path d="M3 21.5V3L21.5 21.5Z" fill="#dfddd2" stroke="#cfccbe" stroke-width="1"/><path d="M6.5 18.5V11L14 18.5Z" fill="#f0f0f0" stroke="#cfccbe" stroke-width=".8"/><rect x="17" y="3" width="4.5" height="15" fill="#e4e2d6" stroke="#cfccbe" stroke-width=".8"/></svg>
<svg class="ic" style="left:64px;top:106px;" width="22" height="22" viewBox="0 0 24 24"><path d="M4 9C4 5 9 4 12 5C15 6 19 4 21 7C23 10 20 13 17 13C14 13 14 17 10 17C6 17 4 13 4 9Z" fill="#d9d9d6" stroke="#cacac7" stroke-width="1" transform="translate(-1,-1)"/><rect x="10" y="13.5" width="10" height="9" rx="1" fill="#d9d9d6" stroke="#cacac7"/><path d="M12 18H16V16L19 18.2L16 20.4V18.6H12Z" fill="#f4f4f4"/></svg>
<svg class="ic" style="left:102px;top:106px;" width="22" height="22" viewBox="0 0 24 24"><path d="M4 9C4 5 9 4 12 5C15 6 19 4 21 7C23 10 20 13 17 13C14 13 14 17 10 17C6 17 4 13 4 9Z" fill="#d9d9d6" stroke="#cacac7" stroke-width="1" transform="translate(-1,-1)"/><rect x="12" y="13.5" width="9.5" height="9.5" rx="1" fill="#d9d9d6" stroke="#cacac7"/><path d="M14.5 19A2.5 2.5 0 1 0 17 16.5" stroke="#f4f4f4" stroke-width="1.3" fill="none"/></svg>
<svg class="ic" style="left:128px;top:106px;" width="22" height="22" viewBox="0 0 24 24"><path d="M4 9C4 5 9 4 12 5C15 6 19 4 21 7C23 10 20 13 17 13C14 13 14 17 10 17C6 17 4 13 4 9Z" fill="#d9d9d6" stroke="#cacac7" stroke-width="1" transform="translate(-1,-1)"/><path d="M10 12L16 10L21 14L19 20L13 21L9 17Z" fill="#dededa" stroke="#cacac7" stroke-width="1"/><circle cx="15" cy="15.5" r="1.3" fill="#cacac7"/></svg>
<svg class="ic" style="left:154px;top:106px;" width="22" height="22" viewBox="0 0 24 24"><path d="M4 9C4 5 9 4 12 5C15 6 19 4 21 7C23 10 20 13 17 13C14 13 14 17 10 17C6 17 4 13 4 9Z" fill="#d9d9d6" stroke="#cacac7" stroke-width="1" transform="translate(-1,-1)"/><ellipse cx="9" cy="8" rx="3.4" ry="2.2" fill="#f0f0f0" stroke="#cacac7" stroke-width=".8"/><g transform="translate(14.5,14.5)"><rect width="8.5" height="8.5" rx="1.2" fill="#d9d9d6" stroke="#cfcfcc" stroke-width="1"/><path d="M4.25 1.6V6.9M1.6 4.25H6.9M2.3 2.3L6.2 6.2M6.2 2.3L2.3 6.2" stroke="#f4f4f4" stroke-width="1.3" fill="none"/></g></svg>
<svg class="ic" style="left:180px;top:106px;" width="22" height="22" viewBox="0 0 24 24"><path d="M4 9C4 5 9 4 12 5C15 6 19 4 21 7C23 10 20 13 17 13C14 13 14 17 10 17C6 17 4 13 4 9Z" fill="#d9d9d6" stroke="#cacac7" stroke-width="1" transform="translate(-1,-1)"/><path d="M4 16C4 13 9 13 9 16C9 19 7 22 5 21C3 20 4 18 4 16Z" fill="#d9d9d6" stroke="#cacac7" stroke-width=".8"/><g transform="translate(14.5,14.5)"><rect width="8.5" height="8.5" rx="1.2" fill="#d9d9d6" stroke="#cfcfcc" stroke-width="1"/><path d="M4.25 1.6V6.9M1.6 4.25H6.9M2.3 2.3L6.2 6.2M6.2 2.3L2.3 6.2" stroke="#f4f4f4" stroke-width="1.3" fill="none"/></g></svg>
<svg class="ic" style="left:206px;top:106px;" width="22" height="22" viewBox="0 0 24 24"><path d="M4 9C4 5 9 4 12 5C15 6 19 4 21 7C23 10 20 13 17 13C14 13 14 17 10 17C6 17 4 13 4 9Z" fill="#d9d9d6" stroke="#cacac7" stroke-width="1" transform="translate(-1,-1)"/><ellipse cx="10" cy="8" rx="4.5" ry="2.6" fill="#e6e6e2" stroke="#cacac7" stroke-width=".8"/><g transform="translate(14.5,14.5)"><rect width="8.5" height="8.5" rx="1.2" fill="#d9d9d6" stroke="#cfcfcc" stroke-width="1"/><path d="M4.25 1.6V6.9M1.6 4.25H6.9M2.3 2.3L6.2 6.2M6.2 2.3L2.3 6.2" stroke="#f4f4f4" stroke-width="1.3" fill="none"/></g></svg>
<svg class="ic" style="left:232px;top:106px;" width="22" height="22" viewBox="0 0 24 24"><path d="M4 9C4 5 9 4 12 5C15 6 19 4 21 7C23 10 20 13 17 13C14 13 14 17 10 17C6 17 4 13 4 9Z" fill="#d9d9d6" stroke="#cacac7" stroke-width="1" transform="translate(-1,-1)"/><ellipse cx="9" cy="8" rx="3.4" ry="2.2" fill="#f0f0f0" stroke="#cacac7" stroke-width=".8"/><g transform="translate(14.5,14.5)"><rect width="8.5" height="8.5" rx="1.2" fill="#d9d9d6" stroke="#cfcfcc" stroke-width="1"/><path d="M2.3 2.3L6.2 6.2M6.2 2.3L2.3 6.2" stroke="#f4f4f4" stroke-width="1.5" fill="none"/></g></svg>
<svg class="ic" style="left:258px;top:106px;" width="22" height="22" viewBox="0 0 24 24"><path d="M4 9C4 5 9 4 12 5C15 6 19 4 21 7C23 10 20 13 17 13C14 13 14 17 10 17C6 17 4 13 4 9Z" fill="#d9d9d6" stroke="#cacac7" stroke-width="1" transform="translate(-1,-1)"/><path d="M4 16C4 13 9 13 9 16C9 19 7 22 5 21C3 20 4 18 4 16Z" fill="#d9d9d6" stroke="#cacac7" stroke-width=".8"/><g transform="translate(14.5,14.5)"><rect width="8.5" height="8.5" rx="1.2" fill="#d9d9d6" stroke="#cfcfcc" stroke-width="1"/><path d="M2.3 2.3L6.2 6.2M6.2 2.3L2.3 6.2" stroke="#f4f4f4" stroke-width="1.5" fill="none"/></g></svg>
<svg class="ic" style="left:283px;top:106px;" width="22" height="22" viewBox="0 0 24 24"><path d="M4 6C6 2 16 3 19 5C22 7 20 11 16 11C13 11 14 20 9 21C5 21 3 10 4 6Z" fill="#d9d9d6" stroke="#cacac7" stroke-width="1"/></svg>
<svg class="ic" style="left:309px;top:106px;" width="22" height="22" viewBox="0 0 24 24"><path d="M4 16C3 12 8 10 11 7C14 4 19 3 21 6C23 9 19 12 16 15C13 18 6 21 4 16Z" fill="#d9d9d6" stroke="#cacac7" stroke-width="1"/><path d="M7 15C7 13 10 12 13 9C15 7 18 6 18.5 7.5" fill="none" stroke="#c2c2be" stroke-width="1"/></svg>
<svg class="ic" style="left:334px;top:106px;" width="22" height="22" viewBox="0 0 24 24"><path d="M3 3L10 17L16 5L21 4" fill="none" stroke="#cacac7" stroke-width="1.2"/><circle cx="3" cy="3" r="1.5" fill="#f0f0f0" stroke="#cacac7"/><circle cx="16" cy="5" r="1.5" fill="#f0f0f0" stroke="#cacac7"/><circle cx="21" cy="4" r="1.5" fill="#f0f0f0" stroke="#cacac7"/><rect x="12" y="13" width="9.5" height="9.5" rx="1.5" fill="#e8e8e6" stroke="#cacac7"/><circle cx="16.7" cy="17.7" r="2.4" fill="none" stroke="#cacac7" stroke-width="1"/></svg>
<svg class="ic" style="left:360px;top:106px;" width="22" height="22" viewBox="0 0 24 24"><path d="M12 2V22M3 12H21" stroke="#cacac7" stroke-width="1.1"/><rect x="16" y="3.5" width="4.5" height="4.5" fill="none" stroke="#cacac7" stroke-width="1"/><rect x="3.5" y="15.5" width="4.5" height="4.5" fill="none" stroke="#cacac7" stroke-width="1" stroke-dasharray="1.5 1"/><circle cx="12" cy="12" r="1.6" fill="#f0f0f0" stroke="#cacac7"/><circle cx="12" cy="18" r="1.6" fill="#f0f0f0" stroke="#cacac7"/></svg>
<svg class="ic" style="left:386px;top:106px;" width="22" height="22" viewBox="0 0 24 24"><path d="M5 3C2 3 2 9 6 10C9 10.5 11 9 11 6C11 3 8 2 5 3Z" fill="#d9d9d6" stroke="#cacac7" stroke-width=".9"/><path d="M13 6C13 3 16 2 19 3C22 4 22 9 18 10C15 10.5 13 9 13 6Z" fill="#d9d9d6" stroke="#cacac7" stroke-width=".9"/><path d="M9 9L15 19M15 9L9 19" stroke="#cacac7" stroke-width="1.5"/><ellipse cx="8.5" cy="20.5" rx="1.8" ry="2.2" fill="none" stroke="#cacac7" stroke-width="1.2"/><ellipse cx="15.5" cy="20.5" rx="1.8" ry="2.2" fill="none" stroke="#cacac7" stroke-width="1.2"/></svg>
<svg class="ic" style="left:412px;top:106px;" width="22" height="22" viewBox="0 0 24 24"><path d="M5 3C2 3 2 9 6 10C9 10.5 11 9 11 6C11 3 8 2 5 3Z" fill="#d9d9d6" stroke="#cacac7" stroke-width=".9"/><path d="M13 6C13 3 16 2 19 3C22 4 22 9 18 10C15 10.5 13 9 13 6Z" fill="#d9d9d6" stroke="#cacac7" stroke-width=".9"/><path d="M9 9L15 19M15 9L9 19" stroke="#cacac7" stroke-width="1.5"/><ellipse cx="8.5" cy="20.5" rx="1.8" ry="2.2" fill="none" stroke="#cacac7" stroke-width="1.2"/><ellipse cx="15.5" cy="20.5" rx="1.8" ry="2.2" fill="none" stroke="#cacac7" stroke-width="1.2"/></svg>
<svg class="ic" style="left:438px;top:106px;" width="22" height="22" viewBox="0 0 24 24"><path d="M5 4C2 4 2 11 6 12C9 12.5 12 11 12 8C12 4 8 3 5 4Z" fill="#d9d9d6" stroke="#cacac7" stroke-width=".9"/><path d="M12 8C12 4 16 3 19 4C22 5 22 11 18 12C15 12.5 12 11 12 8Z" fill="#d9d9d6" stroke="#cacac7" stroke-width=".9"/><path d="M8 12C9 16 12 20 16 21" stroke="#cacac7" stroke-width="1.2" fill="none"/></svg>
<svg class="ic" style="left:464px;top:106px;" width="22" height="22" viewBox="0 0 24 24"><path d="M4 3H20M4 7H20M4 11H20M4 15H20M4 19H20M4 22H20" stroke="#cacac7" stroke-width="1"/><path d="M9 5L12 9L15 5M9 17L12 13L15 17" stroke="#cacac7" stroke-width="1.1" fill="none"/></svg>
<svg class="ic" style="left:489px;top:106px;" width="22" height="22" viewBox="0 0 24 24"><path d="M12 3L20 8L12 12Z" fill="#ececea" stroke="#cacac7" stroke-width="1"/><path d="M12 12L16 21H8Z" fill="#f2f2f0" stroke="#cacac7" stroke-width="1"/><path d="M8 5A8 8 0 0 0 5 14" fill="none" stroke="#cacac7" stroke-width="1.2"/><path d="M8 3V7H4.5" fill="none" stroke="#cacac7" stroke-width="1"/></svg>
<svg class="ic" style="left:89.5px;top:114.5px" width="9" height="5" viewBox="0 0 9 5"><path d="M0 0H9L4.5 5Z" fill="#8a8a8a"/></svg>
<svg class="ic" style="left:515px;top:114.5px" width="9" height="5" viewBox="0 0 9 5"><path d="M0 0H9L4.5 5Z" fill="#8a8a8a"/></svg>
<div class="sep" style="left:527px;top:103px;height:27px"></div>
<div class="b hd" style="left:530px;top:106px;width:4px;height:22px;background-image:radial-gradient(circle at 2.300px 1.200px,#a4a4a4 0.8px,transparent 1.15px);background-size:4px 3.300px"></div>
<div class="b " style="left:537px;top:104px;width:26px;height:25px;background:#c4dff5;border:1px solid #a9d1f2"></div>
<div class="b " style="left:589px;top:104px;width:26px;height:25px;background:#c4dff5;border:1px solid #a9d1f2"></div>
<svg class="ic" style="left:539px;top:106px;" width="22" height="22" viewBox="0 0 24 24"><g transform="translate(12 13.5) scale(.84) translate(-12 -12) rotate(-40 12 12)"><path d="M6.500 4.500V12.500A5.500 5.500 0 0 0 17.500 12.500V4.500" fill="none" stroke="#8f0f0f" stroke-width="6.200"/><path d="M6.500 4.500V12.500A5.500 5.500 0 0 0 17.500 12.500V4.500" fill="none" stroke="#d92626" stroke-width="4.400"/><path d="M4.300 2.500H8.700V6H4.300ZM15.300 2.500H19.700V6H15.300Z" fill="#fff" stroke="#8f0f0f" stroke-width=".8"/></g></svg>
<svg class="ic" style="left:566px;top:106px;" width="22" height="22" viewBox="0 0 24 24"><path d="M4 3L10 18L15 8L19 4M15 8H20M10 13L16 10.500H20M4 8L10 14" fill="none" stroke="#86c494" stroke-width="1.300"/><g fill="#a0a0a0" stroke="#8a8a8a" stroke-width=".5"><circle cx="4" cy="3" r="1.700"/><circle cx="10" cy="18" r="1.800"/><circle cx="15" cy="5" r="1.600"/><circle cx="19.500" cy="5" r="1.600"/><circle cx="15" cy="10.500" r="1.600"/><circle cx="19.500" cy="10.500" r="1.600"/><circle cx="4" cy="8.500" r="1.700"/><circle cx="10" cy="12.500" r="1.500"/></g></svg>
<svg class="ic" style="left:590px;top:106px;" width="22" height="22" viewBox="0 0 24 24"><path d="M4 5L10.500 18.500L17.500 4.500" fill="none" stroke="#74b884" stroke-width="1.300"/></svg>
<svg class="ic" style="left:579.5px;top:122px" width="7" height="4" viewBox="0 0 7 4"><path d="M0 0H7L3.5 4Z" fill="#111"/></svg>
<svg class="ic" style="left:605px;top:122px" width="7" height="4" viewBox="0 0 7 4"><path d="M0 0H7L3.5 4Z" fill="#111"/></svg>
<div class="b hd" style="left:3px;top:135px;width:4px;height:34px;background-image:radial-gradient(circle at 2.300px 1.200px,#a4a4a4 0.8px,transparent 1.15px);background-size:4px 3.300px"></div>
<svg class="ic" style="left:11px;top:140px;" width="22" height="22" viewBox="0 0 24 24"><rect x="2.5" y="3.5" width="16" height="14" fill="#dcdcd6" stroke="#9a9a96" stroke-width="1" stroke-dasharray="1.5 1.5"/><path d="M11 9L20 14.5L16.4 15.4L18.6 19.6L16.8 20.5L14.6 16.4L12 19Z" fill="#f0f0f0" stroke="#a8a8a4" stroke-width="1"/></svg>
<svg class="ic" style="left:50px;top:140px;" width="22" height="22" viewBox="0 0 24 24"><rect x="3" y="4" width="12" height="10" fill="#e2e2de" stroke="#cacac7" stroke-width="1"/><path d="M5 7H13M5 10H13" stroke="#cacac7"/><rect x="8" y="10" width="12" height="10" fill="#e2e2de" stroke="#cacac7" stroke-width="1"/></svg>
<svg class="ic" style="left:89px;top:140px;" width="22" height="22" viewBox="0 0 24 24"><rect x="2.5" y="3.5" width="11" height="11" fill="#f2dc3c" stroke="#c9a91a" stroke-width="1"/><rect x="5.5" y="6.5" width="11" height="11" fill="#f2dc3c" stroke="#c9a91a" stroke-width="1"/><circle cx="17" cy="18" r="4.6" fill="#e03030" stroke="#a01010" stroke-width=".8"/><circle cx="17" cy="18" r="2.6" fill="#f4d0d0"/><path d="M15.2 19.8L18.8 16.2" stroke="#e03030" stroke-width="1.6"/></svg>
<svg class="ic" style="left:126px;top:140px;" width="22" height="22" viewBox="0 0 24 24"><rect x="2.5" y="3.5" width="14" height="13" fill="#f2dc3c" stroke="#c9a91a" stroke-width="1"/><path d="M18.5 13.5C21 13.5 22.3 15.5 21.6 17.6L18.5 23L15.4 17.6C14.7 15.5 16 13.5 18.5 13.5Z" fill="#6c9bd2" stroke="#2d5d99" stroke-width=".9"/><circle cx="18.5" cy="16.8" r="1.3" fill="#fff"/></svg>
<svg class="ic" style="left:37.5px;top:148.5px" width="9" height="5" viewBox="0 0 9 5"><path d="M0 0H9L4.5 5Z" fill="#8a8a8a"/></svg>
<svg class="ic" style="left:75.5px;top:148.5px" width="9" height="5" viewBox="0 0 9 5"><path d="M0 0H9L4.5 5Z" fill="#8a8a8a"/></svg>
<svg class="ic" style="left:114.5px;top:148.5px" width="9" height="5" viewBox="0 0 9 5"><path d="M0 0H9L4.5 5Z" fill="#111"/></svg>
<div class="sep" style="left:152px;top:132px;height:38px"></div>
<div class="b hd" style="left:155px;top:135px;width:4px;height:34px;background-image:radial-gradient(circle at 2.300px 1.200px,#a4a4a4 0.8px,transparent 1.15px);background-size:4px 3.300px"></div>
<svg class="ic" style="left:164px;top:140px;" width="22" height="22" viewBox="0 0 24 24"><rect x="6" y="13" width="12" height="9" rx="1" fill="#111"/><rect x="9.5" y="11.5" width="5" height="2.5" fill="#111"/><circle cx="12" cy="17.5" r="2.6" fill="#f0f0f0"/><circle cx="12" cy="17.5" r="1.3" fill="#111"/><path d="M12 2.5L15.2 6.5H13V10.5H11V6.5H8.8Z" fill="#111"/></svg>
<svg class="ic" style="left:190px;top:140px;" width="22" height="22" viewBox="0 0 24 24"><rect x="3" y="3" width="16" height="13" fill="none" stroke="#111" stroke-width="2" stroke-dasharray="3 1.6"/><rect x="6" y="7" width="10" height="7" fill="#111"/><path d="M7 13L10 9.5L12 11.5L13.5 10L15.5 13Z" fill="#f0f0f0"/><path d="M14 12L22.5 16.5L19 17.5L21 21.5L19.2 22.4L17.2 18.5L14.8 21Z" fill="#fff" stroke="#111" stroke-width="1"/></svg>
<div class="sep" style="left:215px;top:132px;height:38px"></div>
<div class="b hd" style="left:218px;top:135px;width:4px;height:34px;background-image:radial-gradient(circle at 2.300px 1.200px,#a4a4a4 0.8px,transparent 1.15px);background-size:4px 3.300px"></div>
<svg class="ic" style="left:227px;top:140px;" width="22" height="22" viewBox="0 0 24 24"><rect x="1" y="1" width="22" height="22" fill="#5aaa46"/><rect x="1" y="1" width="22" height="22" fill="none" stroke="#4a9a38" stroke-width="1"/><circle cx="14" cy="10" r="6" fill="none" stroke="#e8f4e4" stroke-width="2.2"/><path d="M9.5 14.5L4 20" stroke="#e8f4e4" stroke-width="3" stroke-linecap="round"/></svg>
<svg class="ic" style="left:252px;top:140px;" width="22" height="22" viewBox="0 0 24 24"><rect x="1.5" y="2.5" width="19" height="19" fill="#f0d84a"/><path d="M1.5 2.5H9V9H1.5ZM12 12H20.5V21.5H14Z" fill="#6c9bd2"/><path d="M9 2.5H15L12 9H9ZM1.5 14H8V21.5H1.5Z" fill="#d8602c"/><path d="M3 17C8 14 12 19 19 15" stroke="#3a6fb5" stroke-width="1.6" fill="none"/><path d="M22.5 2L12 14.5" stroke="#b0561e" stroke-width="2.6" stroke-linecap="round"/><path d="M12.5 13L9 18.5L14.5 15Z" fill="#333"/></svg>
<div class="sep" style="left:278px;top:132px;height:38px"></div>
<div class="b hd" style="left:281px;top:135px;width:4px;height:34px;background-image:radial-gradient(circle at 2.300px 1.200px,#a4a4a4 0.8px,transparent 1.15px);background-size:4px 3.300px"></div>
<svg class="ic" style="left:291px;top:140px;" width="22" height="22" viewBox="0 0 24 24"><path d="M15 3C17 1 21 5 19 7L16.5 9.5L17.5 10.5L16 12L12.5 8.5L14 7L15 8Z" fill="#d9d9d6" stroke="#cacac7" stroke-width=".8"/><path d="M13.5 9.5L5 18L4 21L7 20L15.5 11.5Z" fill="#e6e6e2" stroke="#cacac7" stroke-width=".9"/></svg>
<div class="b " style="left:319px;top:145px;width:13px;height:13px;background:#dcdcdc;border-radius:2px"></div>
<svg class="ic" style="left:337.5px;top:148.5px" width="9" height="5" viewBox="0 0 9 5"><path d="M0 0H9L4.5 5Z" fill="#555"/></svg>
<div class="t bd" style="left:349px;top:141.5px;height:20px;line-height:20px;font-size:10.5px;letter-spacing:-.45px;color:#222">Band:</div>
<div class="b " style="left:376.5px;top:143px;width:30px;height:18px;background:#cfcfcf;border:1px solid #bcbcbc"></div>
<div class="t " style="left:380px;top:141.5px;height:20px;line-height:20px;color:#7c7c7c;font-size:11px">1</div>
<svg class="ic" style="left:393px;top:148.500px" width="9" height="6" viewBox="0 0 9 6"><path d="M.5 .5L4.5 4.5L8.500 .5" fill="none" stroke="#9a9a9a" stroke-width="1"/></svg>
<div class="b " style="left:416px;top:142px;width:42px;height:20px;background:#f6f6f6;border:1px solid #c9c9c9"></div>
<div class="t " style="left:419.5px;top:141.5px;height:20px;line-height:20px;color:#7c7c7c;font-size:11px;letter-spacing:.2px">0,0000</div>
<svg class="ic" style="left:468px;top:140px;" width="22" height="22" viewBox="0 0 24 24"><path d="M2 2H12V12H2ZM12 12H22V22H12Z" fill="#e4e4e0"/><path d="M12 2H22V12H12ZM2 12H12V22H2Z" fill="#ececea"/><path d="M18 3L21 5.5L9 19L5 21L6 16.5Z" fill="#e6e6e0" stroke="#cacac7" stroke-width="1"/></svg>
<svg class="ic" style="left:494px;top:140px;" width="22" height="22" viewBox="0 0 24 24"><path d="M2 2H12V12H2ZM12 12H22V22H12Z" fill="#e4e4e0"/><path d="M12 2H22V12H12ZM2 12H12V22H2Z" fill="#ececea"/><path d="M9 6L17 3L21 12L13 16Z" fill="#d8d8d4" stroke="#cacac7" stroke-width="1"/><path d="M7 12L13 17L10 21L5 19Z" fill="#c8ccc4" stroke="#cacac7" stroke-width=".8"/></svg>
<svg class="ic" style="left:519px;top:140px;" width="22" height="22" viewBox="0 0 24 24"><path d="M2 2H12V12H2ZM12 12H22V22H12Z" fill="#e4e4e0"/><path d="M12 2H22V12H12ZM2 12H12V22H2Z" fill="#ececea"/><path d="M14 4L20 9L12 18L6 13Z" fill="#d8d8d4" stroke="#cacac7" stroke-width="1"/><path d="M3 14L10 20L4 21Z" fill="#f4f4f2" stroke="#cacac7" stroke-width=".8" stroke-dasharray="1.5 1"/></svg>
<svg class="ic" style="left:545px;top:140px;" width="22" height="22" viewBox="0 0 24 24"><path d="M2 2H12V12H2ZM12 12H22V22H12Z" fill="#e4e4e0"/><path d="M12 2H22V12H12ZM2 12H12V22H2Z" fill="#ececea"/><text x="12" y="19" text-anchor="middle" font-family="Liberation Serif,serif" font-size="21" fill="#c4c4c0">ε</text></svg>
<svg class="ic" style="left:571px;top:140px;" width="22" height="22" viewBox="0 0 24 24"><path d="M2 2H12V12H2ZM12 12H22V22H12Z" fill="#e4e4e0"/><path d="M12 2H22V12H12ZM2 12H12V22H2Z" fill="#ececea"/><path d="M2 14C6 2 10 2 13 12C15 20 18 20 22 8" fill="none" stroke="#c0c4dc" stroke-width="1.3"/><path d="M2 10C6 20 10 20 13 12C16 4 19 6 22 14" fill="none" stroke="#e0c4c4" stroke-width="1.1"/></svg>
<svg class="ic" style="left:595px;top:140px;" width="22" height="22" viewBox="0 0 24 24"><path d="M2 2H12V12H2ZM12 12H22V22H12Z" fill="#e4e4e0"/><path d="M12 2H22V12H12ZM2 12H12V22H2Z" fill="#ececea"/><path d="M3 12L10 5V9H21V15H10V19Z" fill="#e0d4d0" stroke="#cacac7" stroke-width=".8"/></svg>
<div class="b " style="left:40.5px;top:173px;width:1px;height:658px;background:#fafafa"></div>
<div class="b " style="left:4px;top:175px;width:34px;height:4px;background-image:radial-gradient(circle at 1.200px 2.300px,#a4a4a4 0.8px,transparent 1.15px);background-size:3.300px 4px"></div>
<svg class="ic" style="left:3.5px;top:184px;" width="22" height="22" viewBox="0 0 24 24"><path d="M3 4L9 19L15.5 6L20.5 4.5" fill="none" stroke="#333" stroke-width="1.3"/><g fill="#fff" stroke="#333" stroke-width="1"><circle cx="3" cy="4" r="1.7"/><circle cx="9" cy="19" r="1.7"/><circle cx="15.5" cy="6" r="1.7"/><circle cx="20.5" cy="4.5" r="1.7"/></g><g transform="translate(14.5,14.5)"><rect width="9" height="9" rx="1.5" fill="#64a75f" stroke="#4a8a46" stroke-width="1"/><path d="M4.5 1.8V7.2M1.8 4.5H7.2" stroke="#fff" stroke-width="2" fill="none"/></g></svg>
<svg class="ic" style="left:3.5px;top:209px;" width="22" height="22" viewBox="0 0 24 24"><rect x="2" y="2" width="17" height="17" fill="#7aa3d4"/><path d="M2 2H7.7V7.7H2ZM13.3 2H19V7.7H13.3ZM7.7 7.7H13.3V13.3H7.7ZM2 13.3H7.7V19H2Z" fill="#1f3f6a"/><path d="M7.7 2H13.3V7.7H7.7ZM13.3 13.3H19V19H13.3Z" fill="#4a78b0"/><g transform="translate(14.5,14.5)"><rect width="9" height="9" rx="1.5" fill="#64a75f" stroke="#4a8a46" stroke-width="1"/><path d="M4.5 1.8V7.2M1.8 4.5H7.2" stroke="#fff" stroke-width="2" fill="none"/></g></svg>
<svg class="ic" style="left:3.5px;top:234.5px;" width="22" height="22" viewBox="0 0 24 24"><rect x="2" y="2" width="18" height="18" fill="#7aa3d4" stroke="#2d5d99" stroke-width="1.2"/><path d="M2 12H20M11 2V20M2 2L11 12L20 2M11 12V20" stroke="#1f3f6a" stroke-width="1" fill="none"/><g transform="translate(14.5,14.5)"><rect width="9" height="9" rx="1.5" fill="#64a75f" stroke="#4a8a46" stroke-width="1"/><path d="M4.5 1.8V7.2M1.8 4.5H7.2" stroke="#fff" stroke-width="2" fill="none"/></g></svg>
<svg class="ic" style="left:3.5px;top:259.5px;" width="22" height="22" viewBox="0 0 24 24"><path d="M5 5C5 0 14 0 14 6C14 11 9 14 5 15C8 12 9 10 8 9C6 9 5 7 5 5Z" fill="#4a7fc1" stroke="#2d5d99" stroke-width=".8"/><g transform="translate(13.5,13.5)"><rect width="9" height="9" rx="1.5" fill="#64a75f" stroke="#4a8a46" stroke-width="1"/><path d="M4.5 1.8V7.2M1.8 4.5H7.2" stroke="#fff" stroke-width="2" fill="none"/></g></svg>
<svg class="ic" style="left:3.5px;top:285px;" width="22" height="22" viewBox="0 0 24 24"><path d="M2 21.500C3 14.500 8 6 19 2C19 6 16.500 10.500 9 15C7 16 5 17.500 2 21.500Z" fill="#9bb9de" stroke="#3d6495" stroke-width="1.100" stroke-linejoin="round"/><path d="M2.500 20.500C6 14 11 8 18 3" stroke="#3d6495" stroke-width=".8" fill="none"/><g transform="translate(14.5,14.5)"><rect width="9" height="9" rx="1.5" fill="#64a75f" stroke="#4a8a46" stroke-width="1"/><path d="M4.5 1.8V7.2M1.8 4.5H7.2" stroke="#fff" stroke-width="2" fill="none"/></g></svg>
<svg class="ic" style="left:3.5px;top:310px;" width="22" height="22" viewBox="0 0 24 24"><rect x="2" y="2" width="19" height="19" rx="2" fill="#8fb2dc" stroke="#3a6aa6" stroke-width="1.2"/><path d="M4.5 3.5L9.5 18.5L18.5 3.5" fill="none" stroke="#1f3f6a" stroke-width="1.3"/><g fill="#fff" stroke="#1f3f6a" stroke-width=".8"><circle cx="4.5" cy="3.5" r="1.5"/><circle cx="9.5" cy="18.5" r="1.5"/><circle cx="18.5" cy="3.5" r="1.5"/></g><g transform="translate(14.5,14.5)"><rect width="9" height="9" rx="1.5" fill="#64a75f" stroke="#4a8a46" stroke-width="1"/><path d="M4.5 1.8V7.2M1.8 4.5H7.2" stroke="#fff" stroke-width="2" fill="none"/></g></svg>
<svg class="ic" style="left:3.5px;top:335px;" width="22" height="22" viewBox="0 0 24 24"><path d="M4 8C4 2 10 1 13 3C17 1 21 4 19 10C18 13 17 15 15 16C15 19 13 20 12 18L11 13C8 14 4 13 4 8Z" fill="#4a7fc1" stroke="#1f3f6a" stroke-width="1"/><circle cx="9" cy="7" r="1" fill="#fff"/><path d="M13 3C15 6 15 10 14 14" stroke="#1f3f6a" stroke-width=".8" fill="none"/><g transform="translate(14.5,14.5)"><rect width="9" height="9" rx="1.5" fill="#64a75f" stroke="#4a8a46" stroke-width="1"/><path d="M4.5 1.8V7.2M1.8 4.5H7.2" stroke="#fff" stroke-width="2" fill="none"/></g></svg>
<svg class="ic" style="left:3.5px;top:360px;" width="22" height="22" viewBox="0 0 24 24"><circle cx="11" cy="11" r="9" fill="#a8c4e6" stroke="#1f3f6a" stroke-width="1.2"/><ellipse cx="11" cy="11" rx="4" ry="9" fill="none" stroke="#1f3f6a" stroke-width=".9"/><path d="M2 11H20M3.5 6.5H18.5M3.5 15.5H18.5" stroke="#1f3f6a" stroke-width=".9" fill="none"/><path d="M5 6C7 4 9 6 8 8C7 10 5 9 5 6ZM12 5C14 4 17 6 16 9C15 11 12 9 12 5Z" fill="#4a78b0"/><g transform="translate(14.5,14.5)"><rect width="9" height="9" rx="1.5" fill="#64a75f" stroke="#4a8a46" stroke-width="1"/><path d="M4.5 1.8V7.2M1.8 4.5H7.2" stroke="#fff" stroke-width="2" fill="none"/></g></svg>
<svg class="ic" style="left:3.5px;top:385px;" width="22" height="22" viewBox="0 0 24 24"><circle cx="11" cy="11" r="9" fill="#1f3f6a"/><ellipse cx="11" cy="11" rx="4" ry="9" fill="none" stroke="#dce8f6" stroke-width="1.1"/><path d="M2 11H20M3.5 6.5H18.5M3.5 15.5H18.5" stroke="#dce8f6" stroke-width="1.1" fill="none"/><g transform="translate(14.5,14.5)"><rect width="9" height="9" rx="1.5" fill="#64a75f" stroke="#4a8a46" stroke-width="1"/><path d="M4.5 1.8V7.2M1.8 4.5H7.2" stroke="#fff" stroke-width="2" fill="none"/></g></svg>
<svg class="ic" style="left:3.5px;top:410px;" width="22" height="22" viewBox="0 0 24 24"><circle cx="11" cy="11" r="9" fill="#a8c4e6" stroke="#1f3f6a" stroke-width="1.2"/><ellipse cx="11" cy="11" rx="4" ry="9" fill="none" stroke="#1f3f6a" stroke-width=".9"/><path d="M2 11H20M3.5 6.5H18.5M3.5 15.5H18.5" stroke="#1f3f6a" stroke-width=".9" fill="none"/><path d="M5 5L10 16L15 6" stroke="#1f3f6a" stroke-width="1.2" fill="none"/><g fill="#fff" stroke="#1f3f6a" stroke-width=".7"><circle cx="5" cy="5" r="1.3"/><circle cx="10" cy="16" r="1.3"/><circle cx="15" cy="6" r="1.3"/></g><g transform="translate(14.5,14.5)"><rect width="9" height="9" rx="1.5" fill="#64a75f" stroke="#4a8a46" stroke-width="1"/><path d="M4.5 1.8V7.2M1.8 4.5H7.2" stroke="#fff" stroke-width="2" fill="none"/></g></svg>
<svg class="ic" style="left:3.5px;top:435px;" width="22" height="22" viewBox="0 0 24 24"><path d="M3 4L9 19L15.5 6L20.5 4.5" fill="none" stroke="#333" stroke-width="1.3"/><g fill="#fff" stroke="#333" stroke-width="1"><circle cx="3" cy="4" r="1.7"/><circle cx="9" cy="19" r="1.7"/><circle cx="15.5" cy="6" r="1.7"/><circle cx="20.5" cy="4.5" r="1.7"/></g><g transform="translate(14.5,14.5)"><rect width="8.5" height="8.5" rx="1.2" fill="#dcbc2a" stroke="#c9a91a" stroke-width="1"/><path d="M4.25 1.4V7.1M1.4 4.25H7.1M2.2 2.2L6.3 6.3M6.3 2.2L2.2 6.3" stroke="#fffdf0" stroke-width="1" fill="none"/></g></svg>
<svg class="ic" style="left:9.5px;top:460px;" width="22" height="22" viewBox="0 0 24 24"><rect x="2" y="2" width="18" height="18" fill="#e8eef6" stroke="#2d5d99" stroke-width="1"/><rect x="2" y="2" width="18" height="4.5" fill="#4a78b0"/><path d="M2 6.5H20M2 11H20M2 15.5H20M6.5 2V20M11 2V20M15.5 2V20" stroke="#2d5d99" stroke-width="1"/><g transform="translate(14.5,14.5)"><rect width="9" height="9" rx="1.5" fill="#64a75f" stroke="#4a8a46" stroke-width="1"/><path d="M4.5 1.8V7.2M1.8 4.5H7.2" stroke="#fff" stroke-width="2" fill="none"/></g></svg>
<svg class="ic" style="left:29.5px;top:342.75px" width="8" height="4.5" viewBox="0 0 8 4.5"><path d="M0 0H8L4.0 4.5Z" fill="#111"/></svg>
<svg class="ic" style="left:29.5px;top:367.75px" width="8" height="4.5" viewBox="0 0 8 4.5"><path d="M0 0H8L4.0 4.5Z" fill="#111"/></svg>
<svg class="ic" style="left:29.5px;top:417.75px" width="8" height="4.5" viewBox="0 0 8 4.5"><path d="M0 0H8L4.0 4.5Z" fill="#111"/></svg>
<svg class="ic" style="left:29.5px;top:442.75px" width="8" height="4.5" viewBox="0 0 8 4.5"><path d="M0 0H8L4.0 4.5Z" fill="#111"/></svg>
<div class="b " style="left:42px;top:173px;width:261px;height:25px;background:#d8d8d8"></div>
<div class="t " style="left:46px;top:178.3px;height:20px;line-height:20px;font-size:13px">Layer</div>
<svg class="ic" style="left:263px;top:179px" width="38" height="15" viewBox="0 0 38 15"><path d="M1 5.500H9V13.500H1ZM4 5.500V1.500H12V9.500H9" fill="none" stroke="#222" stroke-width="1.8"/><path d="M1 6H9M4 2H12" stroke="#222" stroke-width="2.600"/><path d="M24 2L34 12.500M34 2L24 12.500" stroke="#222" stroke-width="2.800"/></svg>
<div class="b " style="left:42px;top:198px;width:261px;height:24px;background:#f0f0f0;border-top:1px solid #c6c6c6"></div>
<svg class="ic" style="left:45.25px;top:204.05px" width="14.5" height="14.5" viewBox="0 0 16 16"><path d="M1 8.500L7 5L10 11L4 14Z" fill="#e0523a"/><path d="M2 7L7 4.200L8 6.200L3 9Z" fill="#f0c63a"/><path d="M3 5.500L7 3.200L7.500 4.200L3.500 6.500Z" fill="#5a8fce"/><path d="M8.500 8.500L14 2.500" stroke="#dca04a" stroke-width="2.400" stroke-linecap="round"/></svg>
<svg class="ic" style="left:64.75px;top:204.05px" width="14.5" height="14.5" viewBox="0 0 16 16"><rect x="1.500" y="6" width="7" height="8" rx="1" fill="#f4f4f4" stroke="#9a9a9a"/><rect x="4" y="3.500" width="7" height="8.500" rx="1" fill="#ececec" stroke="#8a8a8a"/><path d="M7.500 .5L10 3H8.500V8H6.500V3H5Z" fill="#a9b9c9" stroke="#7a8a9a" stroke-width=".5"/><rect x="9" y="9" width="6" height="6" rx="1" fill="#64a75f" stroke="#4a8a46" stroke-width=".8"/><path d="M12 10.300V13.700M10.300 12H13.700" stroke="#fff" stroke-width="1.300"/></svg>
<svg class="ic" style="left:84.25px;top:204.05px" width="14.5" height="14.5" viewBox="0 0 16 16"><path d="M.5 7.500C3.500 2.500 10.500 2.500 13.500 7.500C10.500 12 3.500 12 .5 7.500Z" fill="#f4f4f4" stroke="#8a8a8a" stroke-width="1"/><circle cx="7" cy="7.300" r="3" fill="#4a7fc1" stroke="#1f3f6a" stroke-width=".8"/><circle cx="7" cy="7.300" r="1.200" fill="#111"/><path d="M9 11.500H16L12.500 15Z" fill="#111"/></svg>
<svg class="ic" style="left:103.25px;top:204.05px" width="14.5" height="14.5" viewBox="0 0 16 16"><path d="M1.500 1.500H14.500L10 8V14.500L6.500 13V8Z" fill="#6c9bd2" stroke="#3f6fa8" stroke-width="1" stroke-linejoin="round"/><path d="M1.500 1.500H14.500V3.200H1.500Z" fill="#f0d24a"/></svg>
<svg class="ic" style="left:122.75px;top:204.05px" width="14.5" height="14.5" viewBox="0 0 16 16"><text x="1" y="10" font-family="Liberation Serif,serif" font-size="13" fill="#c6c6c6">ε</text><path d="M8 9H14L12.500 15H9.500Z" fill="none" stroke="#d4d4d4" stroke-width="1"/></svg>
<svg class="ic" style="left:141.5px;top:209.55px" width="8" height="4.5" viewBox="0 0 8 4.5"><path d="M0 0H8L4.0 4.5Z" fill="#6e6e6e"/></svg>
<svg class="ic" style="left:154.25px;top:204.05px" width="14.5" height="14.5" viewBox="0 0 16 16"><path d="M2 1.500V14.500M2 5H4.500M2 11.500H4.500" stroke="#9a9a9a" stroke-width="1" fill="none"/><circle cx="5.500" cy="5" r="1.500" fill="#f0a83a"/><circle cx="5.500" cy="11.500" r="1.500" fill="#f0a83a"/><path d="M10.500 1V9.500M6.500 7.500L10.500 13.500L14.500 7.500Z" fill="#4a80c4" stroke="#4a80c4" stroke-width="2.400" stroke-linejoin="round"/></svg>
<svg class="ic" style="left:173.25px;top:204.05px" width="14.5" height="14.5" viewBox="0 0 16 16"><path d="M2 1.500V14.500M2 5H4.500M2 11.500H4.500" stroke="#9a9a9a" stroke-width="1" fill="none"/><circle cx="5.500" cy="5" r="1.500" fill="#f0a83a"/><circle cx="5.500" cy="11.500" r="1.500" fill="#f0a83a"/><path d="M10.500 15V6.500M6.500 8.500L10.500 2.500L14.500 8.500Z" fill="#4a80c4" stroke="#4a80c4" stroke-width="2.400" stroke-linejoin="round"/></svg>
<svg class="ic" style="left:192.25px;top:204.05px" width="14.5" height="14.5" viewBox="0 0 16 16"><rect x="1.500" y="2" width="11.500" height="10.500" fill="#fbfbfb" stroke="#8a8a8a"/><rect x="9.500" y="10.500" width="6" height="4" rx="1" fill="#e23a3a" stroke="#c02020" stroke-width=".7"/><path d="M10.800 12.500H14.200" stroke="#fff" stroke-width="1.200"/></svg>
<div class="b " style="left:42px;top:222px;width:261px;height:609px;background:#fff;border:1px solid #a4a4a6"></div>
<div class="b " style="left:84.3px;top:303.5px;width:200.5px;height:20px;background:#d9d9d9"></div>
<div class="clip" style="left:44px;top:223px;width:240.500px;height:591px"><div style="position:absolute;left:-44px;top:-223px"><svg class="ic" style="left:47px;top:230.5px" width="10" height="7" viewBox="0 0 10 7"><path d="M.7 1L5 5.5L9.300 1" fill="none" stroke="#222" stroke-width="1.4"/></svg><svg class="ic" style="left:66px;top:227px" width="13" height="13" viewBox="0 0 13 13"><rect x=".5" y=".5" width="12" height="12" fill="#fff" stroke="#333" stroke-width="1"/><path d="M2.8 6.600L5.300 9.200L10.300 3.600" fill="none" stroke="#222" stroke-width="1.2"/></svg><svg class="ic" style="left:85px;top:225px" width="15.500" height="16.500" viewBox="0 0 17 18"><rect x="1" y="7" width="8.500" height="9.500" rx="1" fill="#f6f6f6" stroke="#a9a9a9" stroke-width="1"/><rect x="4" y="4.500" width="9" height="10" rx="1" fill="#ededed" stroke="#8d8d8d" stroke-width="1"/><rect x="6.500" y="2.500" width="9" height="10.500" rx="1" fill="#ededed" stroke="#8d8d8d" stroke-width="1"/><path d="M8.500 .5L11.500 3.500H9.700V9H7.300V3.500H5.500Z" fill="#a9b9c9" stroke="#8d8d8d" stroke-width=".6"/></svg><div class="t " style="left:106px;top:223.8px;height:20px;line-height:20px;letter-spacing:-0.06px;">Gebiet_und_Wege</div><svg class="ic" style="left:70.5px;top:248.5px" width="7" height="10" viewBox="0 0 7 10"><path d="M1 .7L5.5 5L1 9.300" fill="none" stroke="#8e8e8e" stroke-width="1.1"/></svg><svg class="ic" style="left:87px;top:247px" width="13" height="13" viewBox="0 0 13 13"><rect x=".5" y=".5" width="12" height="12" fill="#fff" stroke="#333" stroke-width="1"/><path d="M2.8 6.600L5.300 9.200L10.300 3.600" fill="none" stroke="#222" stroke-width="1.2"/></svg><svg class="ic" style="left:106px;top:245px" width="15.500" height="16.500" viewBox="0 0 17 18"><rect x="1" y="7" width="8.500" height="9.500" rx="1" fill="#f6f6f6" stroke="#a9a9a9" stroke-width="1"/><rect x="4" y="4.500" width="9" height="10" rx="1" fill="#ededed" stroke="#8d8d8d" stroke-width="1"/><rect x="6.500" y="2.500" width="9" height="10.500" rx="1" fill="#ededed" stroke="#8d8d8d" stroke-width="1"/><path d="M8.500 .5L11.500 3.500H9.700V9H7.300V3.500H5.500Z" fill="#a9b9c9" stroke="#8d8d8d" stroke-width=".6"/></svg><div class="t " style="left:127px;top:243.8px;height:20px;line-height:20px;letter-spacing:-0.38px;">Strasse</div><svg class="ic" style="left:70.5px;top:268.5px" width="7" height="10" viewBox="0 0 7 10"><path d="M1 .7L5.5 5L1 9.300" fill="none" stroke="#8e8e8e" stroke-width="1.1"/></svg><svg class="ic" style="left:87px;top:267px" width="13" height="13" viewBox="0 0 13 13"><rect x=".5" y=".5" width="12" height="12" fill="#fff" stroke="#333" stroke-width="1"/><path d="M2.8 6.600L5.300 9.200L10.300 3.600" fill="none" stroke="#222" stroke-width="1.2"/></svg><svg class="ic" style="left:106px;top:265px" width="15.500" height="16.500" viewBox="0 0 17 18"><rect x="1" y="7" width="8.500" height="9.500" rx="1" fill="#f6f6f6" stroke="#a9a9a9" stroke-width="1"/><rect x="4" y="4.500" width="9" height="10" rx="1" fill="#ededed" stroke="#8d8d8d" stroke-width="1"/><rect x="6.500" y="2.500" width="9" height="10.500" rx="1" fill="#ededed" stroke="#8d8d8d" stroke-width="1"/><path d="M8.500 .5L11.500 3.500H9.700V9H7.300V3.500H5.500Z" fill="#a9b9c9" stroke="#8d8d8d" stroke-width=".6"/></svg><div class="t " style="left:127px;top:263.8px;height:20px;line-height:20px;letter-spacing:0.04px;">Rundweg</div><svg class="ic" style="left:70.5px;top:288.5px" width="7" height="10" viewBox="0 0 7 10"><path d="M1 .7L5.5 5L1 9.300" fill="none" stroke="#8e8e8e" stroke-width="1.1"/></svg><svg class="ic" style="left:87px;top:287px" width="13" height="13" viewBox="0 0 13 13"><rect x=".5" y=".5" width="12" height="12" fill="#fff" stroke="#333" stroke-width="1"/><path d="M2.8 6.600L5.300 9.200L10.300 3.600" fill="none" stroke="#222" stroke-width="1.2"/></svg><svg class="ic" style="left:106px;top:285px" width="15.500" height="16.500" viewBox="0 0 17 18"><rect x="1" y="7" width="8.500" height="9.500" rx="1" fill="#f6f6f6" stroke="#a9a9a9" stroke-width="1"/><rect x="4" y="4.500" width="9" height="10" rx="1" fill="#ededed" stroke="#8d8d8d" stroke-width="1"/><rect x="6.500" y="2.500" width="9" height="10.500" rx="1" fill="#ededed" stroke="#8d8d8d" stroke-width="1"/><path d="M8.500 .5L11.500 3.500H9.700V9H7.300V3.500H5.500Z" fill="#a9b9c9" stroke="#8d8d8d" stroke-width=".6"/></svg><div class="t " style="left:127px;top:283.8px;height:20px;line-height:20px;letter-spacing:-0.55px;">NSG_1983</div><svg class="ic" style="left:68px;top:310.5px" width="10" height="7" viewBox="0 0 10 7"><path d="M.7 1L5 5.5L9.300 1" fill="none" stroke="#222" stroke-width="1.4"/></svg><svg class="ic" style="left:87px;top:307px" width="13" height="13" viewBox="0 0 13 13"><rect x=".5" y=".5" width="12" height="12" fill="#fff" stroke="#333" stroke-width="1"/><path d="M2.8 6.600L5.300 9.200L10.300 3.600" fill="none" stroke="#222" stroke-width="1.2"/></svg><svg class="ic" style="left:106px;top:305px" width="15.500" height="16.500" viewBox="0 0 17 18"><rect x="1" y="7" width="8.500" height="9.500" rx="1" fill="#f6f6f6" stroke="#a9a9a9" stroke-width="1"/><rect x="4" y="4.500" width="9" height="10" rx="1" fill="#cfe0f3" stroke="#3f78bd" stroke-width="1"/><rect x="6.500" y="2.500" width="9" height="10.500" rx="1" fill="#cfe0f3" stroke="#3f78bd" stroke-width="1"/><path d="M8.500 .5L11.500 3.500H9.700V9H7.300V3.500H5.500Z" fill="#5b8fce" stroke="#3f78bd" stroke-width=".6"/></svg><div class="t " style="left:127px;top:303.8px;height:20px;line-height:20px;letter-spacing:0.01px;">NSG_1937 = Alter Bannwald</div><svg class="ic" style="left:107px;top:327px" width="13" height="13" viewBox="0 0 13 13"><rect x=".5" y=".5" width="12" height="12" fill="#fff" stroke="#333" stroke-width="1"/><path d="M2.8 6.600L5.300 9.200L10.300 3.600" fill="none" stroke="#222" stroke-width="1.2"/></svg><svg class="ic" style="left:127px;top:325.5px" width="15" height="16" viewBox="0 0 15 16"><rect x="1" y="1" width="13" height="14" fill="#fff" stroke="#e31a1c" stroke-width="1.600"/><path d="M5.300 1V15M9.700 1V15" stroke="#c8403a" stroke-width="1"/></svg><div class="t bd" style="left:147px;top:323.8px;height:20px;line-height:20px;letter-spacing:0.0px;">nsg_1937_flaeche</div><svg class="ic" style="left:47px;top:350.5px" width="10" height="7" viewBox="0 0 10 7"><path d="M.7 1L5 5.5L9.300 1" fill="none" stroke="#222" stroke-width="1.4"/></svg><svg class="ic" style="left:66px;top:347px" width="13" height="13" viewBox="0 0 13 13"><rect x=".5" y=".5" width="12" height="12" fill="#fff" stroke="#333" stroke-width="1"/><path d="M2.8 6.600L5.300 9.200L10.300 3.600" fill="none" stroke="#222" stroke-width="1.2"/></svg><svg class="ic" style="left:85px;top:345px" width="15.500" height="16.500" viewBox="0 0 17 18"><rect x="1" y="7" width="8.500" height="9.500" rx="1" fill="#f6f6f6" stroke="#a9a9a9" stroke-width="1"/><rect x="4" y="4.500" width="9" height="10" rx="1" fill="#ededed" stroke="#8d8d8d" stroke-width="1"/><rect x="6.500" y="2.500" width="9" height="10.500" rx="1" fill="#ededed" stroke="#8d8d8d" stroke-width="1"/><path d="M8.500 .5L11.500 3.500H9.700V9H7.300V3.500H5.500Z" fill="#a9b9c9" stroke="#8d8d8d" stroke-width=".6"/></svg><div class="t " style="left:106px;top:343.8px;height:20px;line-height:20px;letter-spacing:0.05px;">Pflanzengesellschaften</div><svg class="ic" style="left:70.5px;top:368.5px" width="7" height="10" viewBox="0 0 7 10"><path d="M1 .7L5.5 5L1 9.300" fill="none" stroke="#8e8e8e" stroke-width="1.1"/></svg><svg class="ic" style="left:87px;top:367px" width="13" height="13" viewBox="0 0 13 13"><rect x=".5" y=".5" width="12" height="12" fill="#fff" stroke="#333" stroke-width="1"/><path d="M2.8 6.600L5.300 9.200L10.300 3.600" fill="none" stroke="#222" stroke-width="1.2"/></svg><svg class="ic" style="left:106px;top:365px" width="15.500" height="16.500" viewBox="0 0 17 18"><rect x="1" y="7" width="8.500" height="9.500" rx="1" fill="#f6f6f6" stroke="#a9a9a9" stroke-width="1"/><rect x="4" y="4.500" width="9" height="10" rx="1" fill="#ededed" stroke="#8d8d8d" stroke-width="1"/><rect x="6.500" y="2.500" width="9" height="10.500" rx="1" fill="#ededed" stroke="#8d8d8d" stroke-width="1"/><path d="M8.500 .5L11.500 3.500H9.700V9H7.300V3.500H5.500Z" fill="#a9b9c9" stroke="#8d8d8d" stroke-width=".6"/></svg><div class="t " style="left:127px;top:363.8px;height:20px;line-height:20px;letter-spacing:0.2px;">evm - Eriophorum_vaginatum</div><svg class="ic" style="left:70.5px;top:388.5px" width="7" height="10" viewBox="0 0 7 10"><path d="M1 .7L5.5 5L1 9.300" fill="none" stroke="#8e8e8e" stroke-width="1.1"/></svg><svg class="ic" style="left:87px;top:387px" width="13" height="13" viewBox="0 0 13 13"><rect x=".5" y=".5" width="12" height="12" fill="#fff" stroke="#333" stroke-width="1"/><path d="M2.8 6.600L5.300 9.200L10.300 3.600" fill="none" stroke="#222" stroke-width="1.2"/></svg><svg class="ic" style="left:106px;top:385px" width="15.500" height="16.500" viewBox="0 0 17 18"><rect x="1" y="7" width="8.500" height="9.500" rx="1" fill="#f6f6f6" stroke="#a9a9a9" stroke-width="1"/><rect x="4" y="4.500" width="9" height="10" rx="1" fill="#ededed" stroke="#8d8d8d" stroke-width="1"/><rect x="6.500" y="2.500" width="9" height="10.500" rx="1" fill="#ededed" stroke="#8d8d8d" stroke-width="1"/><path d="M8.500 .5L11.500 3.500H9.700V9H7.300V3.500H5.500Z" fill="#a9b9c9" stroke="#8d8d8d" stroke-width=".6"/></svg><div class="t " style="left:127px;top:383.8px;height:20px;line-height:20px;letter-spacing:0.2px;">ev3 - Eriophorum_vaginatum</div><svg class="ic" style="left:70.5px;top:408.5px" width="7" height="10" viewBox="0 0 7 10"><path d="M1 .7L5.5 5L1 9.300" fill="none" stroke="#8e8e8e" stroke-width="1.1"/></svg><svg class="ic" style="left:87px;top:407px" width="13" height="13" viewBox="0 0 13 13"><rect x=".5" y=".5" width="12" height="12" fill="#fff" stroke="#333" stroke-width="1"/><path d="M2.8 6.600L5.300 9.200L10.300 3.600" fill="none" stroke="#222" stroke-width="1.2"/></svg><svg class="ic" style="left:106px;top:405px" width="15.500" height="16.500" viewBox="0 0 17 18"><rect x="1" y="7" width="8.500" height="9.500" rx="1" fill="#f6f6f6" stroke="#a9a9a9" stroke-width="1"/><rect x="4" y="4.500" width="9" height="10" rx="1" fill="#ededed" stroke="#8d8d8d" stroke-width="1"/><rect x="6.500" y="2.500" width="9" height="10.500" rx="1" fill="#ededed" stroke="#8d8d8d" stroke-width="1"/><path d="M8.500 .5L11.500 3.500H9.700V9H7.300V3.500H5.500Z" fill="#a9b9c9" stroke="#8d8d8d" stroke-width=".6"/></svg><div class="t " style="left:127px;top:403.8px;height:20px;line-height:20px;letter-spacing:0.2px;">ev4 - Eriophorum_vaginatum</div><svg class="ic" style="left:70.5px;top:428.5px" width="7" height="10" viewBox="0 0 7 10"><path d="M1 .7L5.5 5L1 9.300" fill="none" stroke="#8e8e8e" stroke-width="1.1"/></svg><svg class="ic" style="left:87px;top:427px" width="13" height="13" viewBox="0 0 13 13"><rect x=".5" y=".5" width="12" height="12" fill="#fff" stroke="#333" stroke-width="1"/><path d="M2.8 6.600L5.300 9.200L10.300 3.600" fill="none" stroke="#222" stroke-width="1.2"/></svg><svg class="ic" style="left:106px;top:425px" width="15.500" height="16.500" viewBox="0 0 17 18"><rect x="1" y="7" width="8.500" height="9.500" rx="1" fill="#f6f6f6" stroke="#a9a9a9" stroke-width="1"/><rect x="4" y="4.500" width="9" height="10" rx="1" fill="#ededed" stroke="#8d8d8d" stroke-width="1"/><rect x="6.500" y="2.500" width="9" height="10.500" rx="1" fill="#ededed" stroke="#8d8d8d" stroke-width="1"/><path d="M8.500 .5L11.500 3.500H9.700V9H7.300V3.500H5.500Z" fill="#a9b9c9" stroke="#8d8d8d" stroke-width=".6"/></svg><div class="t " style="left:127px;top:423.8px;height:20px;line-height:20px;letter-spacing:0.2px;">Polytrichum_commune_Fazies</div><svg class="ic" style="left:70.5px;top:448.5px" width="7" height="10" viewBox="0 0 7 10"><path d="M1 .7L5.5 5L1 9.300" fill="none" stroke="#8e8e8e" stroke-width="1.1"/></svg><svg class="ic" style="left:87px;top:447px" width="13" height="13" viewBox="0 0 13 13"><rect x=".5" y=".5" width="12" height="12" fill="#fff" stroke="#333" stroke-width="1"/><path d="M2.8 6.600L5.300 9.200L10.300 3.600" fill="none" stroke="#222" stroke-width="1.2"/></svg><svg class="ic" style="left:106px;top:445px" width="15.500" height="16.500" viewBox="0 0 17 18"><rect x="1" y="7" width="8.500" height="9.500" rx="1" fill="#f6f6f6" stroke="#a9a9a9" stroke-width="1"/><rect x="4" y="4.500" width="9" height="10" rx="1" fill="#ededed" stroke="#8d8d8d" stroke-width="1"/><rect x="6.500" y="2.500" width="9" height="10.500" rx="1" fill="#ededed" stroke="#8d8d8d" stroke-width="1"/><path d="M8.500 .5L11.500 3.500H9.700V9H7.300V3.500H5.500Z" fill="#a9b9c9" stroke="#8d8d8d" stroke-width=".6"/></svg><div class="t " style="left:127px;top:443.8px;height:20px;line-height:20px;letter-spacing:0.2px;">sma - Sphagnetum_magellan</div><svg class="ic" style="left:70.5px;top:468.5px" width="7" height="10" viewBox="0 0 7 10"><path d="M1 .7L5.5 5L1 9.300" fill="none" stroke="#8e8e8e" stroke-width="1.1"/></svg><svg class="ic" style="left:87px;top:467px" width="13" height="13" viewBox="0 0 13 13"><rect x=".5" y=".5" width="12" height="12" fill="#fff" stroke="#333" stroke-width="1"/><path d="M2.8 6.600L5.300 9.200L10.300 3.600" fill="none" stroke="#222" stroke-width="1.2"/></svg><svg class="ic" style="left:106px;top:465px" width="15.500" height="16.500" viewBox="0 0 17 18"><rect x="1" y="7" width="8.500" height="9.500" rx="1" fill="#f6f6f6" stroke="#a9a9a9" stroke-width="1"/><rect x="4" y="4.500" width="9" height="10" rx="1" fill="#ededed" stroke="#8d8d8d" stroke-width="1"/><rect x="6.500" y="2.500" width="9" height="10.500" rx="1" fill="#ededed" stroke="#8d8d8d" stroke-width="1"/><path d="M8.500 .5L11.500 3.500H9.700V9H7.300V3.500H5.500Z" fill="#a9b9c9" stroke="#8d8d8d" stroke-width=".6"/></svg><div class="t " style="left:127px;top:463.8px;height:20px;line-height:20px;letter-spacing:0.20px;">vab - Vaccinio_Abietetum</div><svg class="ic" style="left:70.5px;top:488.5px" width="7" height="10" viewBox="0 0 7 10"><path d="M1 .7L5.5 5L1 9.300" fill="none" stroke="#8e8e8e" stroke-width="1.1"/></svg><svg class="ic" style="left:87px;top:487px" width="13" height="13" viewBox="0 0 13 13"><rect x=".5" y=".5" width="12" height="12" fill="#fff" stroke="#333" stroke-width="1"/><path d="M2.8 6.600L5.300 9.200L10.300 3.600" fill="none" stroke="#222" stroke-width="1.2"/></svg><svg class="ic" style="left:106px;top:485px" width="15.500" height="16.500" viewBox="0 0 17 18"><rect x="1" y="7" width="8.500" height="9.500" rx="1" fill="#f6f6f6" stroke="#a9a9a9" stroke-width="1"/><rect x="4" y="4.500" width="9" height="10" rx="1" fill="#ededed" stroke="#8d8d8d" stroke-width="1"/><rect x="6.500" y="2.500" width="9" height="10.500" rx="1" fill="#ededed" stroke="#8d8d8d" stroke-width="1"/><path d="M8.500 .5L11.500 3.500H9.700V9H7.300V3.500H5.500Z" fill="#a9b9c9" stroke="#8d8d8d" stroke-width=".6"/></svg><div class="t " style="left:127px;top:483.8px;height:20px;line-height:20px;letter-spacing:0.2px;">vpb - Vaccinio_uliginosi_Pinet</div><svg class="ic" style="left:70.5px;top:508.5px" width="7" height="10" viewBox="0 0 7 10"><path d="M1 .7L5.5 5L1 9.300" fill="none" stroke="#8e8e8e" stroke-width="1.1"/></svg><svg class="ic" style="left:87px;top:507px" width="13" height="13" viewBox="0 0 13 13"><rect x=".5" y=".5" width="12" height="12" fill="#fff" stroke="#333" stroke-width="1"/><path d="M2.8 6.600L5.300 9.200L10.300 3.600" fill="none" stroke="#222" stroke-width="1.2"/></svg><svg class="ic" style="left:106px;top:505px" width="15.500" height="16.500" viewBox="0 0 17 18"><rect x="1" y="7" width="8.500" height="9.500" rx="1" fill="#f6f6f6" stroke="#a9a9a9" stroke-width="1"/><rect x="4" y="4.500" width="9" height="10" rx="1" fill="#ededed" stroke="#8d8d8d" stroke-width="1"/><rect x="6.500" y="2.500" width="9" height="10.500" rx="1" fill="#ededed" stroke="#8d8d8d" stroke-width="1"/><path d="M8.500 .5L11.500 3.500H9.700V9H7.300V3.500H5.500Z" fill="#a9b9c9" stroke="#8d8d8d" stroke-width=".6"/></svg><div class="t " style="left:127px;top:503.8px;height:20px;line-height:20px;letter-spacing:0.2px;">vpd - Vaccinio_uliginosi_Pinet</div><svg class="ic" style="left:70.5px;top:528.5px" width="7" height="10" viewBox="0 0 7 10"><path d="M1 .7L5.5 5L1 9.300" fill="none" stroke="#8e8e8e" stroke-width="1.1"/></svg><svg class="ic" style="left:87px;top:527px" width="13" height="13" viewBox="0 0 13 13"><rect x=".5" y=".5" width="12" height="12" fill="#fff" stroke="#333" stroke-width="1"/><path d="M2.8 6.600L5.300 9.200L10.300 3.600" fill="none" stroke="#222" stroke-width="1.2"/></svg><svg class="ic" style="left:106px;top:525px" width="15.500" height="16.500" viewBox="0 0 17 18"><rect x="1" y="7" width="8.500" height="9.500" rx="1" fill="#f6f6f6" stroke="#a9a9a9" stroke-width="1"/><rect x="4" y="4.500" width="9" height="10" rx="1" fill="#ededed" stroke="#8d8d8d" stroke-width="1"/><rect x="6.500" y="2.500" width="9" height="10.500" rx="1" fill="#ededed" stroke="#8d8d8d" stroke-width="1"/><path d="M8.500 .5L11.500 3.500H9.700V9H7.300V3.500H5.500Z" fill="#a9b9c9" stroke="#8d8d8d" stroke-width=".6"/></svg><div class="t " style="left:127px;top:523.8px;height:20px;line-height:20px;letter-spacing:0.2px;">vph - Vaccinio_uliginosi_Pinet</div><svg class="ic" style="left:70.5px;top:548.5px" width="7" height="10" viewBox="0 0 7 10"><path d="M1 .7L5.5 5L1 9.300" fill="none" stroke="#8e8e8e" stroke-width="1.1"/></svg><svg class="ic" style="left:87px;top:547px" width="13" height="13" viewBox="0 0 13 13"><rect x=".5" y=".5" width="12" height="12" fill="#fff" stroke="#333" stroke-width="1"/><path d="M2.8 6.600L5.300 9.200L10.300 3.600" fill="none" stroke="#222" stroke-width="1.2"/></svg><svg class="ic" style="left:106px;top:545px" width="15.500" height="16.500" viewBox="0 0 17 18"><rect x="1" y="7" width="8.500" height="9.500" rx="1" fill="#f6f6f6" stroke="#a9a9a9" stroke-width="1"/><rect x="4" y="4.500" width="9" height="10" rx="1" fill="#ededed" stroke="#8d8d8d" stroke-width="1"/><rect x="6.500" y="2.500" width="9" height="10.500" rx="1" fill="#ededed" stroke="#8d8d8d" stroke-width="1"/><path d="M8.500 .5L11.500 3.500H9.700V9H7.300V3.500H5.500Z" fill="#a9b9c9" stroke="#8d8d8d" stroke-width=".6"/></svg><div class="t " style="left:127px;top:543.8px;height:20px;line-height:20px;letter-spacing:0.2px;">vpm - Vaccinio_uliginosi_P_sy</div><svg class="ic" style="left:70.5px;top:568.5px" width="7" height="10" viewBox="0 0 7 10"><path d="M1 .7L5.5 5L1 9.300" fill="none" stroke="#8e8e8e" stroke-width="1.1"/></svg><svg class="ic" style="left:87px;top:567px" width="13" height="13" viewBox="0 0 13 13"><rect x=".5" y=".5" width="12" height="12" fill="#fff" stroke="#333" stroke-width="1"/><path d="M2.8 6.600L5.300 9.200L10.300 3.600" fill="none" stroke="#222" stroke-width="1.2"/></svg><svg class="ic" style="left:106px;top:565px" width="15.500" height="16.500" viewBox="0 0 17 18"><rect x="1" y="7" width="8.500" height="9.500" rx="1" fill="#f6f6f6" stroke="#a9a9a9" stroke-width="1"/><rect x="4" y="4.500" width="9" height="10" rx="1" fill="#ededed" stroke="#8d8d8d" stroke-width="1"/><rect x="6.500" y="2.500" width="9" height="10.500" rx="1" fill="#ededed" stroke="#8d8d8d" stroke-width="1"/><path d="M8.500 .5L11.500 3.500H9.700V9H7.300V3.500H5.500Z" fill="#a9b9c9" stroke="#8d8d8d" stroke-width=".6"/></svg><div class="t " style="left:127px;top:563.8px;height:20px;line-height:20px;letter-spacing:0.2px;">vpn - Vaccinio_uliginosi_Pinet</div><svg class="ic" style="left:70.5px;top:588.5px" width="7" height="10" viewBox="0 0 7 10"><path d="M1 .7L5.5 5L1 9.300" fill="none" stroke="#8e8e8e" stroke-width="1.1"/></svg><svg class="ic" style="left:87px;top:587px" width="13" height="13" viewBox="0 0 13 13"><rect x=".5" y=".5" width="12" height="12" fill="#fff" stroke="#333" stroke-width="1"/><path d="M2.8 6.600L5.300 9.200L10.300 3.600" fill="none" stroke="#222" stroke-width="1.2"/></svg><svg class="ic" style="left:106px;top:585px" width="15.500" height="16.500" viewBox="0 0 17 18"><rect x="1" y="7" width="8.500" height="9.500" rx="1" fill="#f6f6f6" stroke="#a9a9a9" stroke-width="1"/><rect x="4" y="4.500" width="9" height="10" rx="1" fill="#ededed" stroke="#8d8d8d" stroke-width="1"/><rect x="6.500" y="2.500" width="9" height="10.500" rx="1" fill="#ededed" stroke="#8d8d8d" stroke-width="1"/><path d="M8.500 .5L11.500 3.500H9.700V9H7.300V3.500H5.500Z" fill="#a9b9c9" stroke="#8d8d8d" stroke-width=".6"/></svg><div class="t " style="left:127px;top:583.8px;height:20px;line-height:20px;letter-spacing:0.2px;">vps - Vaccinio_uliginosi_Pinet</div><svg class="ic" style="left:49.5px;top:608.5px" width="7" height="10" viewBox="0 0 7 10"><path d="M1 .7L5.5 5L1 9.300" fill="none" stroke="#8e8e8e" stroke-width="1.1"/></svg><svg class="ic" style="left:66px;top:607px" width="13" height="13" viewBox="0 0 13 13"><rect x=".5" y=".5" width="12" height="12" fill="#fff" stroke="#333" stroke-width="1"/><path d="M2.8 6.600L5.300 9.200L10.300 3.600" fill="none" stroke="#222" stroke-width="1.2"/></svg><svg class="ic" style="left:85px;top:605px" width="15.500" height="16.500" viewBox="0 0 17 18"><rect x="1" y="7" width="8.500" height="9.500" rx="1" fill="#f6f6f6" stroke="#a9a9a9" stroke-width="1"/><rect x="4" y="4.500" width="9" height="10" rx="1" fill="#ededed" stroke="#8d8d8d" stroke-width="1"/><rect x="6.500" y="2.500" width="9" height="10.500" rx="1" fill="#ededed" stroke="#8d8d8d" stroke-width="1"/><path d="M8.500 .5L11.500 3.500H9.700V9H7.300V3.500H5.500Z" fill="#a9b9c9" stroke="#8d8d8d" stroke-width=".6"/></svg><div class="t " style="left:106px;top:603.8px;height:20px;line-height:20px;letter-spacing:0.39px;">Biotope</div><svg class="ic" style="left:47px;top:630.5px" width="10" height="7" viewBox="0 0 10 7"><path d="M.7 1L5 5.5L9.300 1" fill="none" stroke="#222" stroke-width="1.4"/></svg><svg class="ic" style="left:66px;top:627px" width="13" height="13" viewBox="0 0 13 13"><rect x=".5" y=".5" width="12" height="12" fill="#fff" stroke="#333" stroke-width="1"/><path d="M2.8 6.600L5.300 9.200L10.300 3.600" fill="none" stroke="#222" stroke-width="1.2"/></svg><svg class="ic" style="left:85px;top:625.5px" width="16" height="16" viewBox="0 0 16 16"><rect width="16" height="16" fill="#dfe8f2"/><path d="M0 0H5.300V5.300H0ZM10.700 0H16V5.300H10.700ZM5.300 5.300H10.700V10.700H5.300Z" fill="#17375e"/><path d="M0 10.700H5.300V16H0Z" fill="#4a78b0"/><path d="M5.300 0H10.700V5.300H5.300Z" fill="#9ab7d8"/><path d="M10.700 10.700H16V16H10.700Z" fill="#b9cde4"/></svg><div class="t bd" style="left:106px;top:623.8px;height:20px;line-height:20px;letter-spacing:0.13px;">OpenStreetMap Standard</div><svg class="ic" style="left:49.5px;top:648.5px" width="7" height="10" viewBox="0 0 7 10"><path d="M1 .7L5.5 5L1 9.300" fill="none" stroke="#8e8e8e" stroke-width="1.1"/></svg><svg class="ic" style="left:66px;top:647px" width="13" height="13" viewBox="0 0 13 13"><rect x=".5" y=".5" width="12" height="12" fill="#fff" stroke="#333" stroke-width="1"/></svg><svg class="ic" style="left:85px;top:645.5px" width="16" height="16" viewBox="0 0 16 16"><rect width="16" height="16" fill="#dfe8f2"/><path d="M0 0H5.300V5.300H0ZM10.700 0H16V5.300H10.700ZM5.300 5.300H10.700V10.700H5.300Z" fill="#17375e"/><path d="M0 10.700H5.300V16H0Z" fill="#4a78b0"/><path d="M5.300 0H10.700V5.300H5.300Z" fill="#9ab7d8"/><path d="M10.700 10.700H16V16H10.700Z" fill="#b9cde4"/></svg><div class="t bi" style="left:106px;top:643.8px;height:20px;line-height:20px;letter-spacing:0.27px;">WT_DGM1_668m</div><svg class="ic" style="left:49.5px;top:668.5px" width="7" height="10" viewBox="0 0 7 10"><path d="M1 .7L5.5 5L1 9.300" fill="none" stroke="#8e8e8e" stroke-width="1.1"/></svg><svg class="ic" style="left:66px;top:667px" width="13" height="13" viewBox="0 0 13 13"><rect x=".5" y=".5" width="12" height="12" fill="#fff" stroke="#333" stroke-width="1"/></svg><svg class="ic" style="left:85px;top:665.5px" width="16" height="16" viewBox="0 0 16 16"><rect width="16" height="16" fill="#dfe8f2"/><path d="M0 0H5.300V5.300H0ZM10.700 0H16V5.300H10.700ZM5.300 5.300H10.700V10.700H5.300Z" fill="#17375e"/><path d="M0 10.700H5.300V16H0Z" fill="#4a78b0"/><path d="M5.300 0H10.700V5.300H5.300Z" fill="#9ab7d8"/><path d="M10.700 10.700H16V16H10.700Z" fill="#b9cde4"/></svg><div class="t bi" style="left:106px;top:663.8px;height:20px;line-height:20px;letter-spacing:0.16px;">WT_DGM1_668_5m</div><svg class="ic" style="left:66px;top:687px" width="13" height="13" viewBox="0 0 13 13"><rect x=".5" y=".5" width="12" height="12" fill="#fff" stroke="#333" stroke-width="1"/></svg><div class="b " style="left:84px;top:685.5px;width:17px;height:16px;background:#dfb83c;border:1px solid #a88a2a"></div><div class="t bi" style="left:106px;top:683.8px;height:20px;line-height:20px;letter-spacing:-0.18px;">WT_kleiner__669m_SW_shp</div><svg class="ic" style="left:66px;top:707px" width="13" height="13" viewBox="0 0 13 13"><rect x=".5" y=".5" width="12" height="12" fill="#fff" stroke="#333" stroke-width="1"/></svg><svg class="ic" style="left:87px;top:707.5px" width="12" height="12" viewBox="0 0 12 12"><circle cx="6" cy="6" r="5.300" fill="#fff" stroke="#222" stroke-width="1"/><circle cx="6" cy="6" r="1.700" fill="#111"/></svg><div class="t bi" style="left:106px;top:703.8px;height:20px;line-height:20px;letter-spacing:-0.21px;">Funde_feucht_nass_wasser</div><svg class="ic" style="left:49.5px;top:728.5px" width="7" height="10" viewBox="0 0 7 10"><path d="M1 .7L5.5 5L1 9.300" fill="none" stroke="#8e8e8e" stroke-width="1.1"/></svg><svg class="ic" style="left:66px;top:727px" width="13" height="13" viewBox="0 0 13 13"><rect x=".5" y=".5" width="12" height="12" fill="#fff" stroke="#333" stroke-width="1"/></svg><svg class="ic" style="left:85px;top:725.5px" width="16" height="16" viewBox="0 0 16 16"><rect width="16" height="16" fill="#dfe8f2"/><path d="M0 0H5.300V5.300H0ZM10.700 0H16V5.300H10.700ZM5.300 5.300H10.700V10.700H5.300Z" fill="#17375e"/><path d="M0 10.700H5.300V16H0Z" fill="#4a78b0"/><path d="M5.300 0H10.700V5.300H5.300Z" fill="#9ab7d8"/><path d="M10.700 10.700H16V16H10.700Z" fill="#b9cde4"/></svg><div class="t bi" style="left:106px;top:723.8px;height:20px;line-height:20px;letter-spacing:0.10px;">WT_kleiner_669m_SW</div><svg class="ic" style="left:49.5px;top:748.5px" width="7" height="10" viewBox="0 0 7 10"><path d="M1 .7L5.5 5L1 9.300" fill="none" stroke="#8e8e8e" stroke-width="1.1"/></svg><svg class="ic" style="left:66px;top:747px" width="13" height="13" viewBox="0 0 13 13"><rect x=".5" y=".5" width="12" height="12" fill="#fff" stroke="#333" stroke-width="1"/></svg><svg class="ic" style="left:85px;top:745.5px" width="16" height="16" viewBox="0 0 16 16"><rect width="16" height="16" fill="#dfe8f2"/><path d="M0 0H5.300V5.300H0ZM10.700 0H16V5.300H10.700ZM5.300 5.300H10.700V10.700H5.300Z" fill="#17375e"/><path d="M0 10.700H5.300V16H0Z" fill="#4a78b0"/><path d="M5.300 0H10.700V5.300H5.300Z" fill="#9ab7d8"/><path d="M10.700 10.700H16V16H10.700Z" fill="#b9cde4"/></svg><div class="t bi" style="left:106px;top:743.8px;height:20px;line-height:20px;letter-spacing:0.23px;">WT_DGM1_kleiner 669m</div><svg class="ic" style="left:66px;top:767px" width="13" height="13" viewBox="0 0 13 13"><rect x=".5" y=".5" width="12" height="12" fill="#fff" stroke="#333" stroke-width="1"/></svg><svg class="ic" style="left:85px;top:765.5px" width="16" height="16" viewBox="0 0 16 16"><rect width="16" height="16" fill="#dfe8f2"/><path d="M0 0H5.300V5.300H0ZM10.700 0H16V5.300H10.700ZM5.300 5.300H10.700V10.700H5.300Z" fill="#17375e"/><path d="M0 10.700H5.300V16H0Z" fill="#4a78b0"/><path d="M5.300 0H10.700V5.300H5.300Z" fill="#9ab7d8"/><path d="M10.700 10.700H16V16H10.700Z" fill="#b9cde4"/></svg><div class="t bi" style="left:106px;top:763.8px;height:20px;line-height:20px;letter-spacing:0.04px;">WT_DGM1_rast</div><svg class="ic" style="left:66px;top:787px" width="13" height="13" viewBox="0 0 13 13"><rect x=".5" y=".5" width="12" height="12" fill="#fff" stroke="#333" stroke-width="1"/></svg><svg class="ic" style="left:89px;top:789.0px" width="9" height="9" viewBox="0 0 9 9"><circle cx="4.500" cy="4.500" r="3.800" fill="#f59a1c" stroke="#8a5a10" stroke-width=".8"/></svg><div class="t bi" style="left:106px;top:783.8px;height:20px;line-height:20px;letter-spacing:-0.00px;">WT_DGM1_gpkg</div><svg class="ic" style="left:66px;top:807px" width="13" height="13" viewBox="0 0 13 13"><rect x=".5" y=".5" width="12" height="12" fill="#fff" stroke="#333" stroke-width="1"/></svg><svg class="ic" style="left:89px;top:809.0px" width="9" height="9" viewBox="0 0 9 9"><circle cx="4.500" cy="4.500" r="3.800" fill="#d9362c" stroke="#7a1a10" stroke-width=".8"/></svg><div class="t bi" style="left:106px;top:803.8px;height:20px;line-height:20px;letter-spacing:0.0px;">WT_DGM1_xyz</div></div></div>
<div class="b " style="left:285px;top:223px;width:17px;height:591px;background:#f0f0f0"></div>
<div class="b " style="left:285px;top:240px;width:17px;height:466px;background:#cdcdcd"></div>
<svg class="ic" style="left:289px;top:228.5px" width="9" height="7" viewBox="0 0 9 7"><path d="M.7 5.500L4.500 1.500L8.300 5.500" fill="none" stroke="#444" stroke-width="1.500"/></svg>
<svg class="ic" style="left:289px;top:801.5px" width="9" height="7" viewBox="0 0 9 7"><path d="M.7 1.500L4.500 5.500L8.300 1.500" fill="none" stroke="#444" stroke-width="1.500"/></svg>
<div class="b " style="left:44px;top:814px;width:258px;height:16px;background:#f0f0f0"></div>
<div class="b " style="left:60px;top:814px;width:118px;height:16px;background:#cdcdcd"></div>
<svg class="ic" style="left:47.5px;top:817.5px" width="7" height="9" viewBox="0 0 7 9"><path d="M5.500 .7L1.500 4.500L5.500 8.300" fill="none" stroke="#444" stroke-width="1.500"/></svg>
<svg class="ic" style="left:272px;top:817.5px" width="7" height="9" viewBox="0 0 7 9"><path d="M1.500 .7L5.500 4.500L1.500 8.300" fill="none" stroke="#444" stroke-width="1.500"/></svg>
<div class="b " style="left:304px;top:172px;width:980px;height:660px;background:#f5f5f5;border-top:1px solid #c4c4c4;border-bottom:1px solid #c4c4c4"></div>
<svg style="position:absolute;left:307px;top:173px" width="975" height="658" viewBox="307 173 975 658"><defs><g id="tr" fill="none" stroke="#8fba86" stroke-width="1.100" transform="scale(.86)"><ellipse cx="-3" cy="-2.5" rx="2.4" ry="3"/><path d="M-3 .5V5"/><path d="M3 -6L5.6 1H.4ZM3 1V5"/></g><g id="tr2" fill="none" stroke="#8fba86" stroke-width="1.100" transform="scale(.86)"><ellipse cx="3" cy="-2.5" rx="2.4" ry="3"/><path d="M3 .5V5"/><path d="M-3 -6L-.4 1H-5.600ZM-3 1V5"/></g><pattern id="hatch" width="6.7" height="10" patternUnits="userSpaceOnUse" x="323.6"><path d="M.5 0V10" stroke="#a5341a" stroke-width=".85"/></pattern><clipPath id="redclip"><path d="M325.7 712.8L395 653L483 560L568 467L611 450L1290 300L1290 700L611 724.5L342.7 742L328 728Z"/></clipPath></defs><rect x="307" y="173" width="975" height="658" fill="#add19e"/><path d="M307 708L345 669" stroke="#b7d4e6" stroke-width="4" fill="none" stroke-linecap="round"/><path d="M307 810L368 782L431 744" stroke="#b7d4e6" stroke-width="3.6" fill="none" stroke-linecap="round"/><path d="M566 722L575 742L611 780L650 820L664 833" stroke="#d9dcc4" stroke-width="3" fill="none" opacity=".8"/><path d="M566 722L575 742L611 780L650 820L664 833" stroke="#e6a8a0" stroke-width="1.4" stroke-dasharray="3 3" fill="none"/><g><use href="#tr" x="365" y="509"/><use href="#tr2" x="345" y="460"/><use href="#tr" x="376" y="236"/><use href="#tr2" x="429" y="322"/><use href="#tr" x="449" y="253"/><use href="#tr2" x="609" y="711"/><use href="#tr2" x="485" y="558"/><use href="#tr" x="366" y="311"/><use href="#tr" x="615" y="560"/><use href="#tr2" x="546" y="553"/><use href="#tr" x="456" y="497"/><use href="#tr2" x="346" y="614"/><use href="#tr" x="367" y="636"/><use href="#tr2" x="940" y="827"/><use href="#tr2" x="366" y="680"/><use href="#tr" x="387" y="471"/><use href="#tr" x="580" y="448"/><use href="#tr" x="480" y="328"/><use href="#tr2" x="536" y="494"/><use href="#tr" x="312" y="451"/><use href="#tr" x="409" y="592"/><use href="#tr" x="512" y="282"/><use href="#tr" x="308" y="275"/><use href="#tr" x="407" y="415"/><use href="#tr" x="333" y="750"/><use href="#tr2" x="554" y="404"/><use href="#tr" x="1137" y="827"/><use href="#tr" x="331" y="800"/><use href="#tr" x="824" y="818"/><use href="#tr" x="471" y="682"/><use href="#tr" x="1101" y="822"/><use href="#tr" x="335" y="359"/><use href="#tr2" x="561" y="630"/><use href="#tr" x="1223" y="824"/><use href="#tr" x="523" y="325"/><use href="#tr" x="432" y="275"/><use href="#tr" x="451" y="718"/><use href="#tr" x="436" y="185"/><use href="#tr" x="554" y="368"/><use href="#tr" x="436" y="773"/><use href="#tr2" x="312" y="700"/><use href="#tr2" x="412" y="544"/><use href="#tr" x="427" y="466"/><use href="#tr" x="459" y="646"/><use href="#tr" x="523" y="801"/><use href="#tr2" x="466" y="459"/><use href="#tr" x="499" y="385"/><use href="#tr" x="326" y="393"/><use href="#tr" x="371" y="822"/><use href="#tr" x="410" y="350"/><use href="#tr" x="572" y="261"/><use href="#tr" x="395" y="214"/><use href="#tr" x="379" y="792"/><use href="#tr" x="390" y="738"/><use href="#tr" x="613" y="376"/><use href="#tr2" x="553" y="186"/><use href="#tr" x="493" y="487"/><use href="#tr" x="980" y="820"/><use href="#tr" x="361" y="261"/><use href="#tr" x="583" y="335"/><use href="#tr2" x="594" y="477"/><use href="#tr2" x="565" y="807"/><use href="#tr" x="610" y="410"/><use href="#tr" x="349" y="191"/><use href="#tr" x="351" y="724"/><use href="#tr" x="438" y="413"/><use href="#tr" x="381" y="350"/><use href="#tr" x="1031" y="816"/><use href="#tr" x="452" y="343"/><use href="#tr" x="514" y="557"/><use href="#tr" x="534" y="765"/><use href="#tr" x="312" y="499"/><use href="#tr" x="310" y="668"/><use href="#tr2" x="577" y="208"/><use href="#tr" x="587" y="790"/><use href="#tr" x="599" y="661"/><use href="#tr2" x="471" y="282"/><use href="#tr2" x="1193" y="830"/><use href="#tr" x="496" y="236"/><use href="#tr" x="340" y="641"/><use href="#tr2" x="608" y="190"/><use href="#tr" x="524" y="675"/><use href="#tr2" x="526" y="450"/><use href="#tr" x="367" y="434"/><use href="#tr2" x="489" y="790"/><use href="#tr" x="473" y="178"/><use href="#tr2" x="581" y="407"/><use href="#tr" x="497" y="415"/><use href="#tr" x="342" y="217"/><use href="#tr" x="550" y="218"/><use href="#tr2" x="341" y="539"/><use href="#tr" x="626" y="819"/><use href="#tr" x="402" y="503"/><use href="#tr2" x="550" y="337"/><use href="#tr" x="458" y="756"/><use href="#tr2" x="695" y="827"/><use href="#tr" x="562" y="686"/><use href="#tr" x="613" y="309"/><use href="#tr" x="331" y="582"/><use href="#tr2" x="497" y="820"/><use href="#tr" x="372" y="406"/><use href="#tr" x="344" y="295"/><use href="#tr" x="410" y="827"/><use href="#tr" x="546" y="274"/><use href="#tr" x="314" y="730"/><use href="#tr" x="529" y="245"/><use href="#tr2" x="567" y="597"/><use href="#tr" x="515" y="584"/><use href="#tr" x="372" y="563"/><use href="#tr2" x="406" y="240"/><use href="#tr" x="309" y="309"/><use href="#tr" x="509" y="349"/><use href="#tr" x="447" y="572"/><use href="#tr" x="614" y="588"/><use href="#tr" x="487" y="605"/><use href="#tr" x="787" y="815"/><use href="#tr2" x="513" y="625"/><use href="#tr" x="522" y="702"/><use href="#tr2" x="434" y="685"/><use href="#tr2" x="313" y="625"/><use href="#tr2" x="310" y="349"/><use href="#tr2" x="394" y="705"/><use href="#tr" x="493" y="302"/><use href="#tr2" x="485" y="636"/><use href="#tr" x="341" y="826"/><use href="#tr" x="1252" y="827"/><use href="#tr" x="525" y="201"/><use href="#tr" x="364" y="763"/><use href="#tr2" x="560" y="308"/><use href="#tr" x="664" y="826"/><use href="#tr" x="490" y="722"/><use href="#tr" x="426" y="645"/><use href="#tr" x="553" y="712"/><use href="#tr" x="734" y="820"/><use href="#tr" x="586" y="824"/><use href="#tr2" x="463" y="220"/><use href="#tr2" x="608" y="629"/><use href="#tr" x="406" y="288"/><use href="#tr2" x="405" y="769"/><use href="#tr2" x="616" y="766"/><use href="#tr2" x="354" y="336"/><use href="#tr2" x="583" y="235"/><use href="#tr2" x="611" y="266"/><use href="#tr2" x="378" y="183"/><use href="#tr" x="335" y="684"/><use href="#tr" x="462" y="373"/><use href="#tr2" x="418" y="742"/><use href="#tr" x="314" y="556"/><use href="#tr" x="575" y="504"/><use href="#tr2" x="875" y="824"/><use href="#tr" x="492" y="528"/><use href="#tr" x="1063" y="817"/><use href="#tr" x="372" y="599"/><use href="#tr" x="317" y="774"/><use href="#tr" x="614" y="343"/><use href="#tr2" x="358" y="376"/><use href="#tr" x="573" y="762"/><use href="#tr2" x="338" y="434"/><use href="#tr" x="547" y="657"/><use href="#tr2" x="398" y="647"/><use href="#tr" x="324" y="249"/><use href="#tr" x="376" y="536"/><use href="#tr" x="417" y="377"/><use href="#tr2" x="576" y="730"/><use href="#tr2" x="456" y="617"/><use href="#tr" x="541" y="823"/><use href="#tr" x="396" y="315"/><use href="#tr" x="605" y="218"/><use href="#tr2" x="435" y="808"/><use href="#tr" x="495" y="667"/><use href="#tr2" x="560" y="474"/><use href="#tr2" x="617" y="507"/><use href="#tr" x="340" y="490"/><use href="#tr" x="312" y="204"/><use href="#tr" x="612" y="449"/><use href="#tr" x="543" y="738"/><use href="#tr2" x="406" y="446"/><use href="#tr" x="459" y="530"/><use href="#tr" x="602" y="534"/><use href="#tr" x="472" y="402"/><use href="#tr" x="508" y="178"/><use href="#tr" x="571" y="539"/><use href="#tr" x="431" y="514"/><use href="#tr" x="430" y="225"/><use href="#tr2" x="581" y="290"/><use href="#tr" x="582" y="179"/><use href="#tr" x="409" y="176"/><use href="#tr2" x="584" y="371"/><use href="#tr" x="910" y="823"/><use href="#tr" x="497" y="448"/><use href="#tr" x="488" y="760"/><use href="#tr" x="526" y="520"/><use href="#tr" x="540" y="611"/><use href="#tr" x="457" y="310"/></g><path d="M1178 836L1232 817.500" stroke="#efe71c" stroke-width="6.500" fill="none"/><path d="M486 170L467 196L466 219L478 247L596 328L610 359L610 385L606 395L574 416L539 412L430 298L403 275L375 271L349 272.5L328.5 297L329 322L352 347L440 403L500 460L497 494L494 520L480 537L448 582L341 696L326 712L329 728L343 741L432 736L520 719.6L611 715L1290 700L1290 170Z" fill="#bae73e" fill-opacity=".86" stroke="#4e6e2c" stroke-width="1"/><path d="M325.7 712.8L395 653L483 560L568 467L611 450L1290 300L1290 700L611 715L520 719.6L432 736L342.7 742L328 728Z" fill="#f5d52c" fill-opacity=".42"/><path d="M432 736L520 719.6L611 715L611 724.5L342.7 742Z" fill="#b8a99a" fill-opacity=".55"/><path d="M431 744L470 715L525 660L548 655" stroke="#e6e8c0" stroke-width="2.5" fill="none" opacity=".45"/><path d="M498.5 572L611 489L1290 300L1290 700L611 700L538.7 658.7L526 655.6Z" fill="#ffe27a" fill-opacity=".62" stroke="#5a4a14" stroke-width="1"/><path d="M587 543L611 526L611 556L593 610L572 636L551 655L554 690L556 713L611 713L611 600L560 616Z" fill="#c08f98" fill-opacity=".85"/><path d="M587 543L611 526L611 560L592 612L561 614Z" fill="#c2929a" stroke="#8a6470" stroke-width=".8"/><path d="M551 655L565 673L611 656L611 713L556 713L546 688Z" fill="#bd8a94" stroke="#8a6470" stroke-width=".6"/><path d="M534 600L556 600L566 610L566 626L556 636.5L534 636.5L525 626L525 610Z" fill="#d98a6a" stroke="#9a5038" stroke-width="1"/><path d="M551 655.6L572 636.5L611 613.5L611 655.6L565.4 672.8Z" fill="#5762d6" stroke="#3a3f9a" stroke-width="1"/><circle cx="615" cy="667" r="9" fill="#86c060" stroke="#4a7a30" stroke-width="1"/><path d="M584.5 685.4L596.8 678.6L611 678L611 713L591 713Z" fill="#e6a070" stroke="#9a6038" stroke-width="1"/><path d="M325.7 712.8L395 653L483 560L568 467L611 450L1290 300L1290 700L611 724.5L342.7 742L328 728Z" fill="url(#hatch)"/><path d="M611 604L587 617L537.5 652L544 690L554 716L611 713.7" fill="none" stroke="#f4a51c" stroke-width="4" stroke-linejoin="round"/><path d="M325.7 712.8L395 653L483 560L568 467L611 450L1290 300L1290 700L611 724.5L342.7 742L328 728Z" fill="none" stroke="#e31a1c" stroke-width="3.2" stroke-linejoin="round"/><text x="545" y="623" text-anchor="middle" font-family="Liberation Sans,sans-serif" font-size="14" fill="#111">evm</text><text x="599" y="638" font-family="Liberation Sans,sans-serif" font-size="14" fill="#111">vp</text><text x="604" y="514" font-family="Liberation Sans,sans-serif" font-size="14" fill="#111">vp</text><text x="602" y="698" font-family="Liberation Sans,sans-serif" font-size="14" fill="#111">s</text><text x="567" y="714" font-family="Liberation Sans,sans-serif" font-size="9" fill="#b0508a">Rundweg</text></svg>
<div class="b " style="left:1287px;top:173px;width:313px;height:25px;background:#d8d8d8"></div>
<div class="t " style="left:1291px;top:178.3px;height:20px;line-height:20px;font-size:13px">Browser</div>
<svg class="ic" style="left:1560px;top:179px" width="38" height="15" viewBox="0 0 38 15"><path d="M1 5.500H9V13.500H1ZM4 5.500V1.500H12V9.500H9" fill="none" stroke="#222" stroke-width="1.8"/><path d="M1 6H9M4 2H12" stroke="#222" stroke-width="2.600"/><path d="M24 2L34 12.500M34 2L24 12.500" stroke="#222" stroke-width="2.800"/></svg>
<div class="b " style="left:1287px;top:198px;width:313px;height:24px;background:#f0f0f0;border-top:1px solid #c6c6c6"></div>
<svg class="ic" style="left:1310px;top:204px" width="15" height="15" viewBox="0 0 16 16"><path d="M1.500 7A6.500 6 0 0 1 12.500 3.500L14.500 1.500V7H9L11 5A4 3.800 0 0 0 4.500 7Z" fill="#4a8fdc" stroke="#2565b5" stroke-width=".7"/><path d="M14.500 9A6.500 6 0 0 1 3.500 12.500L1.500 14.500V9H7L5 11A4 3.800 0 0 0 11.500 9Z" fill="#4a8fdc" stroke="#2565b5" stroke-width=".7"/></svg>
<svg class="ic" style="left:1330px;top:204.5px" width="14" height="14" viewBox="0 0 16 16"><path d="M1.500 1.500H14.500L10 8V14.500L6.500 13V8Z" fill="#6c9bd2" stroke="#3f6fa8" stroke-width="1" stroke-linejoin="round"/><path d="M1.500 1.500H14.500V3.200H1.500Z" fill="#f0d24a"/></svg>
<svg class="ic" style="left:1348.5px;top:204px" width="15" height="15" viewBox="0 0 16 16"><path d="M2 1.500V14.500M2 5H4.500M2 11.500H4.500M2 1.500H6" stroke="#9a9a9a" stroke-width="1" fill="none"/><circle cx="5.500" cy="5" r="1.500" fill="#f0a83a"/><circle cx="5.500" cy="11.500" r="1.500" fill="#f0a83a"/><path d="M10.500 15V6.500M6.500 8.500L10.500 2.500L14.500 8.500Z" fill="#5b8fce" stroke="#3a5f8f" stroke-width="1.600" stroke-linejoin="round"/><path d="M10.500 14.500V7" stroke="#5b8fce" stroke-width="2.200"/></svg>
<svg class="ic" style="left:1367.5px;top:204.5px" width="14" height="14" viewBox="0 0 16 16"><circle cx="8" cy="8" r="6.800" fill="#6d9bd1" stroke="#5585c0" stroke-width=".8"/><text x="8" y="12" text-anchor="middle" font-family="Liberation Serif,serif" font-style="italic" font-weight="bold" font-size="11" fill="#fff">i</text></svg>
<div class="b " style="left:1288px;top:222px;width:312px;height:609px;background:#fff;border:1px solid #a4a4a6"></div>
<div class="clip" style="left:1289px;top:223px;width:292.500px;height:591px"><div style="position:absolute;left:-1289px;top:-223px"><svg class="ic" style="left:1357.5px;top:228.5px" width="7" height="10" viewBox="0 0 7 10"><path d="M1 .7L5.5 5L1 9.300" fill="none" stroke="#8e8e8e" stroke-width="1.1"/></svg><svg class="ic" style="left:1375px;top:226.8px" width="15" height="14" viewBox="0 0 15 14"><path d="M.5 2C.5 1.400 .9 1 1.500 1H5.500L7 2.800H13.500C14.100 2.800 14.500 3.200 14.500 3.800V13H.5Z" fill="#f1f1f1" stroke="#9b9b9b" stroke-width="1"/></svg><div class="t " style="left:1396px;top:223.8px;height:20px;line-height:20px;letter-spacing:0.08px;">Forst - WMS-Dienste</div><svg class="ic" style="left:1357.5px;top:248.5px" width="7" height="10" viewBox="0 0 7 10"><path d="M1 .7L5.5 5L1 9.300" fill="none" stroke="#8e8e8e" stroke-width="1.1"/></svg><svg class="ic" style="left:1375px;top:246.8px" width="15" height="14" viewBox="0 0 15 14"><path d="M.5 2C.5 1.400 .9 1 1.500 1H5.500L7 2.800H13.500C14.100 2.800 14.500 3.200 14.500 3.800V13H.5Z" fill="#f1f1f1" stroke="#9b9b9b" stroke-width="1"/></svg><div class="t " style="left:1396px;top:243.8px;height:20px;line-height:20px;letter-spacing:0.12px;">Forums-Beiträge</div><svg class="ic" style="left:1357.5px;top:268.5px" width="7" height="10" viewBox="0 0 7 10"><path d="M1 .7L5.5 5L1 9.300" fill="none" stroke="#8e8e8e" stroke-width="1.1"/></svg><svg class="ic" style="left:1375px;top:266.8px" width="15" height="14" viewBox="0 0 15 14"><path d="M.5 2C.5 1.400 .9 1 1.500 1H5.500L7 2.800H13.500C14.100 2.800 14.500 3.200 14.500 3.800V13H.5Z" fill="#f1f1f1" stroke="#9b9b9b" stroke-width="1"/></svg><div class="t " style="left:1396px;top:263.8px;height:20px;line-height:20px;letter-spacing:-0.08px;">Fotos</div><svg class="ic" style="left:1357.5px;top:288.5px" width="7" height="10" viewBox="0 0 7 10"><path d="M1 .7L5.5 5L1 9.300" fill="none" stroke="#8e8e8e" stroke-width="1.1"/></svg><svg class="ic" style="left:1375px;top:286.8px" width="15" height="14" viewBox="0 0 15 14"><path d="M.5 2C.5 1.400 .9 1 1.500 1H5.500L7 2.800H13.500C14.100 2.800 14.500 3.200 14.500 3.800V13H.5Z" fill="#f1f1f1" stroke="#9b9b9b" stroke-width="1"/></svg><div class="t " style="left:1396px;top:283.8px;height:20px;line-height:20px;letter-spacing:0.22px;">geopackage</div><svg class="ic" style="left:1357.5px;top:308.5px" width="7" height="10" viewBox="0 0 7 10"><path d="M1 .7L5.5 5L1 9.300" fill="none" stroke="#8e8e8e" stroke-width="1.1"/></svg><svg class="ic" style="left:1375px;top:306.8px" width="15" height="14" viewBox="0 0 15 14"><path d="M.5 2C.5 1.400 .9 1 1.500 1H5.500L7 2.800H13.500C14.100 2.800 14.500 3.200 14.500 3.800V13H.5Z" fill="#f1f1f1" stroke="#9b9b9b" stroke-width="1"/></svg><div class="t " style="left:1396px;top:303.8px;height:20px;line-height:20px;letter-spacing:0.39px;">geotiff_export</div><svg class="ic" style="left:1357.5px;top:328.5px" width="7" height="10" viewBox="0 0 7 10"><path d="M1 .7L5.5 5L1 9.300" fill="none" stroke="#8e8e8e" stroke-width="1.1"/></svg><svg class="ic" style="left:1375px;top:326.8px" width="15" height="14" viewBox="0 0 15 14"><path d="M.5 2C.5 1.400 .9 1 1.500 1H5.500L7 2.800H13.500C14.100 2.800 14.500 3.200 14.500 3.800V13H.5Z" fill="#f1f1f1" stroke="#9b9b9b" stroke-width="1"/></svg><div class="t " style="left:1396px;top:323.8px;height:20px;line-height:20px;letter-spacing:0.15px;">gpx-Exporte</div><svg class="ic" style="left:1357.5px;top:348.5px" width="7" height="10" viewBox="0 0 7 10"><path d="M1 .7L5.5 5L1 9.300" fill="none" stroke="#8e8e8e" stroke-width="1.1"/></svg><svg class="ic" style="left:1375px;top:346.8px" width="15" height="14" viewBox="0 0 15 14"><path d="M.5 2C.5 1.400 .9 1 1.500 1H5.500L7 2.800H13.500C14.100 2.800 14.500 3.200 14.500 3.800V13H.5Z" fill="#f1f1f1" stroke="#9b9b9b" stroke-width="1"/></svg><div class="t " style="left:1396px;top:343.8px;height:20px;line-height:20px;letter-spacing:0.15px;">gpx-Importe</div><svg class="ic" style="left:1357.5px;top:368.5px" width="7" height="10" viewBox="0 0 7 10"><path d="M1 .7L5.5 5L1 9.300" fill="none" stroke="#8e8e8e" stroke-width="1.1"/></svg><svg class="ic" style="left:1375px;top:366.8px" width="15" height="14" viewBox="0 0 15 14"><path d="M.5 2C.5 1.400 .9 1 1.500 1H5.500L7 2.800H13.500C14.100 2.800 14.500 3.200 14.500 3.800V13H.5Z" fill="#f1f1f1" stroke="#9b9b9b" stroke-width="1"/></svg><div class="t " style="left:1396px;top:363.8px;height:20px;line-height:20px;letter-spacing:0.15px;">Index</div><svg class="ic" style="left:1357.5px;top:388.5px" width="7" height="10" viewBox="0 0 7 10"><path d="M1 .7L5.5 5L1 9.300" fill="none" stroke="#8e8e8e" stroke-width="1.1"/></svg><svg class="ic" style="left:1375px;top:386.8px" width="15" height="14" viewBox="0 0 15 14"><path d="M.5 2C.5 1.400 .9 1 1.500 1H5.500L7 2.800H13.500C14.100 2.800 14.500 3.200 14.500 3.800V13H.5Z" fill="#f1f1f1" stroke="#9b9b9b" stroke-width="1"/></svg><div class="t " style="left:1396px;top:383.8px;height:20px;line-height:20px;letter-spacing:0.15px;">JPG-Import</div><svg class="ic" style="left:1357.5px;top:408.5px" width="7" height="10" viewBox="0 0 7 10"><path d="M1 .7L5.5 5L1 9.300" fill="none" stroke="#8e8e8e" stroke-width="1.1"/></svg><svg class="ic" style="left:1375px;top:406.8px" width="15" height="14" viewBox="0 0 15 14"><path d="M.5 2C.5 1.400 .9 1 1.500 1H5.500L7 2.800H13.500C14.100 2.800 14.500 3.200 14.500 3.800V13H.5Z" fill="#f1f1f1" stroke="#9b9b9b" stroke-width="1"/></svg><div class="t " style="left:1396px;top:403.8px;height:20px;line-height:20px;letter-spacing:0.25px;">kml-Exporte</div><svg class="ic" style="left:1357.5px;top:428.5px" width="7" height="10" viewBox="0 0 7 10"><path d="M1 .7L5.5 5L1 9.300" fill="none" stroke="#8e8e8e" stroke-width="1.1"/></svg><svg class="ic" style="left:1375px;top:426.8px" width="15" height="14" viewBox="0 0 15 14"><path d="M.5 2C.5 1.400 .9 1 1.500 1H5.500L7 2.800H13.500C14.100 2.800 14.500 3.200 14.500 3.800V13H.5Z" fill="#f1f1f1" stroke="#9b9b9b" stroke-width="1"/></svg><div class="t " style="left:1396px;top:423.8px;height:20px;line-height:20px;letter-spacing:0.15px;">models</div><svg class="ic" style="left:1357.5px;top:448.5px" width="7" height="10" viewBox="0 0 7 10"><path d="M1 .7L5.5 5L1 9.300" fill="none" stroke="#8e8e8e" stroke-width="1.1"/></svg><svg class="ic" style="left:1375px;top:446.8px" width="15" height="14" viewBox="0 0 15 14"><path d="M.5 2C.5 1.400 .9 1 1.500 1H5.500L7 2.800H13.500C14.100 2.800 14.500 3.200 14.500 3.800V13H.5Z" fill="#f1f1f1" stroke="#9b9b9b" stroke-width="1"/></svg><div class="t " style="left:1396px;top:443.8px;height:20px;line-height:20px;letter-spacing:0.15px;">nicht georeferenzierte Karten, Scan</div><svg class="ic" style="left:1357.5px;top:468.5px" width="7" height="10" viewBox="0 0 7 10"><path d="M1 .7L5.5 5L1 9.300" fill="none" stroke="#8e8e8e" stroke-width="1.1"/></svg><svg class="ic" style="left:1375px;top:466.8px" width="15" height="14" viewBox="0 0 15 14"><path d="M.5 2C.5 1.400 .9 1 1.500 1H5.500L7 2.800H13.500C14.100 2.800 14.500 3.200 14.500 3.800V13H.5Z" fill="#f1f1f1" stroke="#9b9b9b" stroke-width="1"/></svg><div class="t " style="left:1396px;top:463.8px;height:20px;line-height:20px;letter-spacing:0.27px;">Offline-Karten</div><svg class="ic" style="left:1357.5px;top:488.5px" width="7" height="10" viewBox="0 0 7 10"><path d="M1 .7L5.5 5L1 9.300" fill="none" stroke="#8e8e8e" stroke-width="1.1"/></svg><svg class="ic" style="left:1375px;top:486.8px" width="15" height="14" viewBox="0 0 15 14"><path d="M.5 2C.5 1.400 .9 1 1.500 1H5.500L7 2.800H13.500C14.100 2.800 14.500 3.200 14.500 3.800V13H.5Z" fill="#f1f1f1" stroke="#9b9b9b" stroke-width="1"/></svg><div class="t " style="left:1396px;top:483.8px;height:20px;line-height:20px;letter-spacing:0.15px;">pdf</div><svg class="ic" style="left:1357.5px;top:508.5px" width="7" height="10" viewBox="0 0 7 10"><path d="M1 .7L5.5 5L1 9.300" fill="none" stroke="#8e8e8e" stroke-width="1.1"/></svg><svg class="ic" style="left:1375px;top:506.8px" width="15" height="14" viewBox="0 0 15 14"><path d="M.5 2C.5 1.400 .9 1 1.500 1H5.500L7 2.800H13.500C14.100 2.800 14.500 3.200 14.500 3.800V13H.5Z" fill="#f1f1f1" stroke="#9b9b9b" stroke-width="1"/></svg><div class="t " style="left:1396px;top:503.8px;height:20px;line-height:20px;letter-spacing:0.15px;">planlauf_terrain</div><svg class="ic" style="left:1357.5px;top:528.5px" width="7" height="10" viewBox="0 0 7 10"><path d="M1 .7L5.5 5L1 9.300" fill="none" stroke="#8e8e8e" stroke-width="1.1"/></svg><svg class="ic" style="left:1375px;top:526.8px" width="15" height="14" viewBox="0 0 15 14"><path d="M.5 2C.5 1.400 .9 1 1.500 1H5.500L7 2.800H13.500C14.100 2.800 14.500 3.200 14.500 3.800V13H.5Z" fill="#f1f1f1" stroke="#9b9b9b" stroke-width="1"/></svg><div class="t " style="left:1396px;top:523.8px;height:20px;line-height:20px;letter-spacing:0.15px;">plugins</div><svg class="ic" style="left:1357.5px;top:548.5px" width="7" height="10" viewBox="0 0 7 10"><path d="M1 .7L5.5 5L1 9.300" fill="none" stroke="#8e8e8e" stroke-width="1.1"/></svg><svg class="ic" style="left:1375px;top:546.8px" width="15" height="14" viewBox="0 0 15 14"><path d="M.5 2C.5 1.400 .9 1 1.500 1H5.500L7 2.800H13.500C14.100 2.800 14.500 3.200 14.500 3.800V13H.5Z" fill="#f1f1f1" stroke="#9b9b9b" stroke-width="1"/></svg><div class="t " style="left:1396px;top:543.8px;height:20px;line-height:20px;letter-spacing:-0.07px;">Rechtliches</div><svg class="ic" style="left:1357.5px;top:568.5px" width="7" height="10" viewBox="0 0 7 10"><path d="M1 .7L5.5 5L1 9.300" fill="none" stroke="#8e8e8e" stroke-width="1.1"/></svg><svg class="ic" style="left:1375px;top:566.8px" width="15" height="14" viewBox="0 0 15 14"><path d="M.5 2C.5 1.400 .9 1 1.500 1H5.500L7 2.800H13.500C14.100 2.800 14.500 3.200 14.500 3.800V13H.5Z" fill="#f1f1f1" stroke="#9b9b9b" stroke-width="1"/></svg><div class="t " style="left:1396px;top:563.8px;height:20px;line-height:20px;letter-spacing:0.07px;">Shape-Exporte</div><svg class="ic" style="left:1355px;top:590.5px" width="10" height="7" viewBox="0 0 10 7"><path d="M.7 1L5 5.5L9.300 1" fill="none" stroke="#222" stroke-width="1.4"/></svg><svg class="ic" style="left:1375px;top:586.8px" width="15" height="14" viewBox="0 0 15 14"><path d="M.5 1H5.500L7 2.800H13.500V5H.5Z" fill="#8d8d8d" stroke="#7a7a7a" stroke-width="1"/><path d="M.5 4.500H4.500L6 6H14.500V13H.5Z" fill="#f4f4f4" stroke="#8d8d8d" stroke-width="1"/></svg><div class="t " style="left:1396px;top:583.8px;height:20px;line-height:20px;letter-spacing:0.15px;">Shapes</div><svg class="ic" style="left:1378.5px;top:608.5px" width="7" height="10" viewBox="0 0 7 10"><path d="M1 .7L5.5 5L1 9.300" fill="none" stroke="#8e8e8e" stroke-width="1.1"/></svg><svg class="ic" style="left:1396px;top:606.8px" width="15" height="14" viewBox="0 0 15 14"><path d="M.5 2C.5 1.400 .9 1 1.500 1H5.500L7 2.800H13.500C14.100 2.800 14.500 3.200 14.500 3.800V13H.5Z" fill="#f1f1f1" stroke="#9b9b9b" stroke-width="1"/></svg><div class="t " style="left:1417px;top:603.8px;height:20px;line-height:20px;letter-spacing:0.15px;">Biotop Feldgehölze W Feldren</div><svg class="ic" style="left:1378.5px;top:628.5px" width="7" height="10" viewBox="0 0 7 10"><path d="M1 .7L5.5 5L1 9.300" fill="none" stroke="#8e8e8e" stroke-width="1.1"/></svg><svg class="ic" style="left:1396px;top:626.8px" width="15" height="14" viewBox="0 0 15 14"><path d="M.5 2C.5 1.400 .9 1 1.500 1H5.500L7 2.800H13.500C14.100 2.800 14.500 3.200 14.500 3.800V13H.5Z" fill="#f1f1f1" stroke="#9b9b9b" stroke-width="1"/></svg><div class="t " style="left:1417px;top:623.8px;height:20px;line-height:20px;letter-spacing:0.21px;">Biotope Oberer Reutweg</div><svg class="ic" style="left:1378.5px;top:648.5px" width="7" height="10" viewBox="0 0 7 10"><path d="M1 .7L5.5 5L1 9.300" fill="none" stroke="#8e8e8e" stroke-width="1.1"/></svg><svg class="ic" style="left:1396px;top:646.8px" width="15" height="14" viewBox="0 0 15 14"><path d="M.5 2C.5 1.400 .9 1 1.500 1H5.500L7 2.800H13.500C14.100 2.800 14.500 3.200 14.500 3.800V13H.5Z" fill="#f1f1f1" stroke="#9b9b9b" stroke-width="1"/></svg><div class="t " style="left:1417px;top:643.8px;height:20px;line-height:20px;letter-spacing:0.23px;">Biotope Oberer Reutweg - Kop</div><svg class="ic" style="left:1376px;top:670.5px" width="10" height="7" viewBox="0 0 10 7"><path d="M.7 1L5 5.5L9.300 1" fill="none" stroke="#222" stroke-width="1.4"/></svg><svg class="ic" style="left:1396px;top:666.8px" width="15" height="14" viewBox="0 0 15 14"><path d="M.5 1H5.500L7 2.800H13.500V5H.5Z" fill="#8d8d8d" stroke="#7a7a7a" stroke-width="1"/><path d="M.5 4.500H4.500L6 6H14.500V13H.5Z" fill="#f4f4f4" stroke="#8d8d8d" stroke-width="1"/></svg><div class="t " style="left:1417px;top:663.8px;height:20px;line-height:20px;letter-spacing:0.15px;">WT</div><svg class="ic" style="left:1399.5px;top:688.5px" width="7" height="10" viewBox="0 0 7 10"><path d="M1 .7L5.5 5L1 9.300" fill="none" stroke="#8e8e8e" stroke-width="1.1"/></svg><svg class="ic" style="left:1417px;top:686.8px" width="15" height="14" viewBox="0 0 15 14"><path d="M.5 2C.5 1.400 .9 1 1.500 1H5.500L7 2.800H13.500C14.100 2.800 14.500 3.200 14.500 3.800V13H.5Z" fill="#f1f1f1" stroke="#9b9b9b" stroke-width="1"/></svg><div class="t " style="left:1438px;top:683.8px;height:20px;line-height:20px;letter-spacing:-0.12px;">Fliessgewaessernetz</div><svg class="ic" style="left:1417.5px;top:705.5px" width="17" height="13" viewBox="0 0 17 13"><path d="M1.500 2.200C3 .6 6 1.200 8.500 2.600C11 1.200 14 .8 15.500 1.800C16.600 3.500 16.800 7 15.800 9.200C14.500 10.300 12 9.200 8.800 7.600C6.500 8.800 4.500 11 2.800 12C1.500 12.200 .6 11 .8 9C.6 6.500 .6 4 1.500 2.200Z" fill="#cbdaee" stroke="#3f5878" stroke-width="1.200" stroke-linejoin="round"/></svg><div class="t " style="left:1438px;top:703.8px;height:20px;line-height:20px;letter-spacing:0.06px;">boeden.shp</div><svg class="ic" style="left:1417.5px;top:725.5px" width="17" height="13" viewBox="0 0 17 13"><path d="M1.500 2.200C3 .6 6 1.200 8.500 2.600C11 1.200 14 .8 15.500 1.800C16.600 3.500 16.800 7 15.800 9.200C14.500 10.300 12 9.200 8.800 7.600C6.500 8.800 4.500 11 2.800 12C1.500 12.200 .6 11 .8 9C.6 6.500 .6 4 1.500 2.200Z" fill="#cbdaee" stroke="#3f5878" stroke-width="1.200" stroke-linejoin="round"/></svg><div class="t " style="left:1438px;top:723.8px;height:20px;line-height:20px;letter-spacing:-0.37px;">Funde_feucht_nass_wasser.s</div><svg class="ic" style="left:1417.5px;top:745.5px" width="17" height="13" viewBox="0 0 17 13"><path d="M1.500 2.200C3 .6 6 1.200 8.500 2.600C11 1.200 14 .8 15.500 1.800C16.600 3.500 16.800 7 15.800 9.200C14.500 10.300 12 9.200 8.800 7.600C6.500 8.800 4.500 11 2.800 12C1.500 12.200 .6 11 .8 9C.6 6.500 .6 4 1.500 2.200Z" fill="#cbdaee" stroke="#3f5878" stroke-width="1.200" stroke-linejoin="round"/></svg><div class="t " style="left:1438px;top:743.8px;height:20px;line-height:20px;letter-spacing:-0.30px;">WT_kleiner__669m_shp.shp</div><svg class="ic" style="left:1378.5px;top:768.5px" width="7" height="10" viewBox="0 0 7 10"><path d="M1 .7L5.5 5L1 9.300" fill="none" stroke="#8e8e8e" stroke-width="1.1"/></svg><svg class="ic" style="left:1396px;top:766.8px" width="15" height="14" viewBox="0 0 15 14"><path d="M.5 2C.5 1.400 .9 1 1.500 1H5.500L7 2.800H13.500C14.100 2.800 14.500 3.200 14.500 3.800V13H.5Z" fill="#f1f1f1" stroke="#9b9b9b" stroke-width="1"/></svg><div class="t " style="left:1417px;top:763.8px;height:20px;line-height:20px;letter-spacing:-0.20px;">zoo_khe</div><svg class="ic" style="left:1396.5px;top:785.5px" width="17" height="13" viewBox="0 0 17 13"><path d="M1.500 2.200C3 .6 6 1.200 8.500 2.600C11 1.200 14 .8 15.500 1.800C16.600 3.500 16.800 7 15.800 9.200C14.500 10.300 12 9.200 8.800 7.600C6.500 8.800 4.500 11 2.800 12C1.500 12.200 .6 11 .8 9C.6 6.500 .6 4 1.500 2.200Z" fill="#cbdaee" stroke="#3f5878" stroke-width="1.200" stroke-linejoin="round"/></svg><div class="t " style="left:1417px;top:783.8px;height:20px;line-height:20px;letter-spacing:-0.02px;">baeume_zoo.shp</div><svg class="ic" style="left:1357.5px;top:808.5px" width="7" height="10" viewBox="0 0 7 10"><path d="M1 .7L5.5 5L1 9.300" fill="none" stroke="#8e8e8e" stroke-width="1.1"/></svg><svg class="ic" style="left:1375px;top:806.8px" width="15" height="14" viewBox="0 0 15 14"><path d="M.5 2C.5 1.400 .9 1 1.500 1H5.500L7 2.800H13.500C14.100 2.800 14.500 3.200 14.500 3.800V13H.5Z" fill="#f1f1f1" stroke="#9b9b9b" stroke-width="1"/></svg><div class="t " style="left:1396px;top:803.8px;height:20px;line-height:20px;letter-spacing:0.15px;">tiff_export</div></div></div>
<div class="b " style="left:1583px;top:223px;width:16px;height:591px;background:#f0f0f0"></div>
<div class="b " style="left:1583px;top:357px;width:16px;height:154px;background:#cdcdcd"></div>
<svg class="ic" style="left:1586.5px;top:228.5px" width="9" height="7" viewBox="0 0 9 7"><path d="M.7 5.500L4.500 1.500L8.300 5.500" fill="none" stroke="#444" stroke-width="1.500"/></svg>
<svg class="ic" style="left:1586.5px;top:801.5px" width="9" height="7" viewBox="0 0 9 7"><path d="M.7 1.500L4.500 5.500L8.300 1.500" fill="none" stroke="#444" stroke-width="1.500"/></svg>
<div class="b " style="left:1289px;top:814px;width:310px;height:16px;background:#f0f0f0"></div>
<div class="b " style="left:1306px;top:814px;width:197px;height:16px;background:#cdcdcd"></div>
<svg class="ic" style="left:1292.5px;top:817.5px" width="7" height="9" viewBox="0 0 7 9"><path d="M5.500 .7L1.500 4.500L5.500 8.300" fill="none" stroke="#444" stroke-width="1.500"/></svg>
<svg class="ic" style="left:1569.5px;top:817.5px" width="7" height="9" viewBox="0 0 7 9"><path d="M1.500 .7L5.500 4.500L1.500 8.300" fill="none" stroke="#444" stroke-width="1.500"/></svg>
<div class="b " style="left:0px;top:832px;width:1600px;height:26px;background:#f0f0f0"></div>
<div class="b " style="left:4px;top:836px;width:230px;height:18px;background:#fff;border:1px solid #7a7a7a"></div>
<svg class="ic" style="left:10px;top:839px" width="12" height="12" viewBox="0 0 12 12"><circle cx="4.800" cy="4.800" r="3.600" fill="none" stroke="#8a8a8a" stroke-width="1.100"/><path d="M7.500 7.500L11 11" stroke="#8a8a8a" stroke-width="1.300"/></svg>
<div class="t " style="left:27px;top:835.5px;height:20px;line-height:20px;color:#7d7d7d;font-size:11px;letter-spacing:-.1px">Zu suchender Typ (Strg+K)</div>
<div class="t d11" style="left:771px;top:836px;height:20px;line-height:20px;letter-spacing:-0.32px;">Koordinate</div>
<div class="b " style="left:824px;top:836px;width:109px;height:18px;background:#fff;border:1px solid #8a8a8a"></div>
<div class="t d11" style="left:829px;top:836px;height:20px;line-height:20px;letter-spacing:-.15px">473559.1,5397838.4</div>
<svg class="ic" style="left:936px;top:836px" width="18" height="20" viewBox="0 0 18 20"><ellipse cx="8" cy="10" rx="5" ry="7.200" fill="#e8e8e8" stroke="#111" stroke-width="2" transform="rotate(-25 8 10)"/><path d="M3.500 5L10 13M6 3.500L12.500 11M2.500 8L8 15" stroke="#111" stroke-width="1.500"/><circle cx="10.500" cy="13.500" r="2.200" fill="#fff" stroke="#111" stroke-width="1.300"/><circle cx="10.500" cy="13.500" r=".8" fill="#111"/><path d="M13 4L16 1M14 6L17 5" stroke="#222" stroke-width=".8"/></svg>
<div class="t d11" style="left:964px;top:836px;height:20px;line-height:20px;letter-spacing:-0.54px;">Maßstab</div>
<div class="b " style="left:1007px;top:836px;width:76px;height:18px;background:#fff;border:1px solid #8a8a8a"></div>
<div class="t d11" style="left:1011px;top:836px;height:20px;line-height:20px;">1:3000</div>
<svg class="ic" style="left:1067px;top:842.500px" width="10" height="7" viewBox="0 0 10 7"><path d="M.7 1L5 5.300L9.300 1" fill="none" stroke="#444" stroke-width="1.100"/></svg>
<svg class="ic" style="left:1091px;top:837px" width="14" height="17" viewBox="0 0 14 17"><path d="M3.500 8V5A3.500 3.500 0 0 1 10.500 5V8" fill="none" stroke="#8c8c8c" stroke-width="1.800"/><rect x="1" y="7.500" width="12" height="8.500" rx="1" fill="#727272"/></svg>
<div class="t d11" style="left:1112.5px;top:836px;height:20px;line-height:20px;letter-spacing:-0.19px;">Vergrößerung</div>
<div class="b " style="left:1181px;top:836px;width:71px;height:18px;background:#fff;border:1px solid #8a8a8a"></div><div class="t d11" style="left:1183.5px;top:836px;height:20px;line-height:20px;">100%</div><svg class="ic" style="left:1238px;top:838px" width="12" height="15" viewBox="0 0 12 15"><rect x=".5" y=".5" width="11" height="14" fill="#f0f0f0" stroke="#c0c0c0" stroke-width=".8"/><path d="M3 5.500L6 2L9 5.500ZM3 9.500L6 13L9 9.500Z" fill="#111"/></svg>
<div class="t d11" style="left:1261px;top:836px;height:20px;line-height:20px;letter-spacing:-0.46px;">Drehung</div>
<div class="b " style="left:1308px;top:836px;width:70px;height:18px;background:#fff;border:1px solid #8a8a8a"></div><div class="t d11" style="left:1310.5px;top:836px;height:20px;line-height:20px;">0,0 °</div><svg class="ic" style="left:1364px;top:838px" width="12" height="15" viewBox="0 0 12 15"><rect x=".5" y=".5" width="11" height="14" fill="#f0f0f0" stroke="#c0c0c0" stroke-width=".8"/><path d="M3 5.500L6 2L9 5.500ZM3 9.500L6 13L9 9.500Z" fill="#111"/></svg>
<svg class="ic" style="left:1384.5px;top:839.5px" width="13" height="13" viewBox="0 0 13 13"><rect x=".5" y=".5" width="12" height="12" fill="#fff" stroke="#333" stroke-width="1"/><path d="M2.8 6.600L5.300 9.200L10.300 3.600" fill="none" stroke="#222" stroke-width="1.2"/></svg>
<div class="t d11" style="left:1403px;top:836px;height:20px;line-height:20px;letter-spacing:-0.41px;">Zeichnen</div>
<svg class="ic" style="left:1459px;top:837.500px" width="18" height="17" viewBox="0 0 18 17"><ellipse cx="9" cy="8.500" rx="8" ry="7.500" fill="#f4f4f4" stroke="#666" stroke-width="1.100"/><ellipse cx="9" cy="8.500" rx="3.500" ry="7.500" fill="none" stroke="#666" stroke-width=".9"/><path d="M1 8.500H17M2.500 4.500H15.500M2.500 12.500H15.500M9 1V16" stroke="#666" stroke-width=".9"/></svg>
<div class="t d11" style="left:1479px;top:836px;height:20px;line-height:20px;letter-spacing:-0.62px;">EPSG:25832</div>
<svg class="ic" style="left:1552px;top:837px" width="19" height="18" viewBox="0 0 19 18"><path d="M9.500 1C14.500 1 18 3.800 18 7.500C18 11.200 14.500 14 10.500 14L12.500 17.500L6.500 13.500C3 12.500 1 10.200 1 7.500C1 3.800 4.500 1 9.500 1Z" fill="#555"/><circle cx="5.500" cy="7.500" r="1.300" fill="#fff"/><circle cx="9.500" cy="7.500" r="1.300" fill="#fff"/><circle cx="13.500" cy="7.500" r="1.300" fill="#fff"/></svg>
<svg class="ic" style="left:1578px;top:836px" width="22" height="20" viewBox="0 0 22 20"><path d="M2 5H8C7 2 11 1 11 4V5H16V10H18C21 9 21 14 18 13H16V18H2V13C5 14 5 9 2 10Z" fill="#c9cfc2" stroke="#6e746a" stroke-width="1.100"/><path d="M14 3L21 2L18 8" fill="#aab0a4" stroke="#6e746a" stroke-width=".8"/></svg>
<div class="b " style="left:0px;top:857.5px;width:1600px;height:6px;background:linear-gradient(90deg,#151515 0,#1c1b19 20%,#2e2a24 38%,#221f1c 55%,#2a2927 67.5%,#4a4a48 67.6%,#4a4a48 70.7%,#262523 70.8%,#302c28 85%,#1a1a1a 100%)"></div>
<div class="b " style="left:611px;top:67px;width:692px;height:752px;background:#f0f0f0;border:1px solid rgba(0,0,0,.42);box-shadow:2px 3px 7px rgba(0,0,0,.3)"></div>
<div class="b " style="left:612px;top:68px;width:690px;height:30px;background:#fff"></div>
<svg class="ic" style="left:618px;top:74.500px" width="17" height="17" viewBox="0 0 24 24"><circle cx="11" cy="11" r="7.4" fill="none" stroke="#5d9a33" stroke-width="5"/><path d="M12 12L22.5 22.5" stroke="#5d9a33" stroke-width="4.6"/><path d="M12.5 12.5L22 22" stroke="#8fc457" stroke-width="1.6"/><circle cx="10.5" cy="10.5" r="2.4" fill="#f0b73a"/><path d="M11 11L15 15" stroke="#e0562c" stroke-width="2"/></svg>
<div class="t " style="left:640px;top:73px;height:20px;line-height:20px;letter-spacing:.05px">Neuer Shapedatei-Layer</div>
<svg class="ic" style="left:1279.500px;top:77.200px" width="11" height="11" viewBox="0 0 11 11"><path d="M.5 .5L10.500 10.500M10.500 .5L.5 10.500" stroke="#111" stroke-width="1.100"/></svg>
<div class="t d11" style="left:620.5px;top:106.7px;height:20px;line-height:20px;">Dateiname</div>
<div class="b " style="left:790px;top:108px;width:476px;height:18px;background:#fff;border:1px solid #7a7a7a"></div>
<div class="b btn" style="left:1272px;top:108px;width:21px;height:17px;"></div>
<div class="t " style="left:1277px;top:104.5px;height:20px;line-height:20px;font-size:11px">...</div>
<div class="t d11" style="left:620.5px;top:130.1px;height:20px;line-height:20px;">Dateikodierung</div>
<div class="b cmb" style="left:790px;top:131.5px;width:503px;height:17px;"></div>
<div class="t d11" style="left:793.5px;top:130px;height:20px;line-height:20px;letter-spacing:0">UTF-8</div>
<svg class="ic" style="left:1278.5px;top:137.5px" width="10" height="7" viewBox="0 0 10 7"><path d="M.7 1L5 5.300L9.300 1" fill="none" stroke="#444" stroke-width="1.100"/></svg>
<div class="t d11" style="left:620.5px;top:154.6px;height:20px;line-height:20px;">Geometrietyp</div>
<div class="b " style="left:790px;top:154px;width:503px;height:22px;background:#cce4f7;border:1px solid #0078d7"></div>
<svg class="ic" style="left:1278.5px;top:162.5px" width="10" height="7" viewBox="0 0 10 7"><path d="M.7 1L5 5.300L9.300 1" fill="none" stroke="#444" stroke-width="1.100"/></svg>
<div class="t d11" style="left:620.5px;top:179.5px;height:20px;line-height:20px;">Zusätzliche Dimensionen</div>
<div class="b " style="left:621px;top:236px;width:672px;height:120px;border:1px solid #dcdcdc"></div>
<div class="b " style="left:626px;top:230px;width:62px;height:12px;background:#f0f0f0"></div>
<div class="t d11 bd" style="left:628.5px;top:226.2px;height:20px;line-height:20px;letter-spacing:-.45px">Neues Feld</div>
<div class="t d11" style="left:630.5px;top:252px;height:20px;line-height:20px;">Name</div>
<div class="b " style="left:663.5px;top:252.5px;width:619.5px;height:18px;background:#fff;border:1px solid #7a7a7a"></div>
<div class="t d11" style="left:630.5px;top:277px;height:20px;line-height:20px;">Typ</div>
<div class="b cmb" style="left:663.5px;top:276px;width:619.5px;height:21px;"></div>
<div class="t " style="left:668px;top:276.5px;height:20px;line-height:20px;font-size:9px;font-weight:bold;color:#6a6a6a">abc</div>
<div class="t d11" style="left:686.5px;top:277px;height:20px;line-height:20px;">Textdaten</div>
<svg class="ic" style="left:1268px;top:284px" width="10" height="7" viewBox="0 0 10 7"><path d="M.7 1L5 5.300L9.300 1" fill="none" stroke="#444" stroke-width="1.100"/></svg>
<div class="t d11" style="left:630.5px;top:302px;height:20px;line-height:20px;">Länge</div>
<div class="b " style="left:663.5px;top:302.5px;width:114px;height:18px;background:#fff;border:1px solid #7a7a7a"></div>
<div class="t d11" style="left:666.5px;top:302px;height:20px;line-height:20px;">80</div>
<div class="t d11" style="left:782.5px;top:302px;height:20px;line-height:20px;">Genauigkeit</div>
<div class="b " style="left:842.5px;top:302.5px;width:441px;height:18px;background:#f0f0f0;border:1px solid #d9d9d9"></div>
<div class="b btnd" style="left:843.5px;top:326.5px;width:439.5px;height:20px;"></div>
<svg class="ic" style="left:849px;top:329px" width="15" height="16" viewBox="0 0 15 16"><rect x="1" y="1" width="4.500" height="14" fill="#d8d8d8" stroke="#b4b4b4"/><rect x="5.500" y="3" width="8" height="11" fill="#d4d4d4" stroke="#b9b9b9"/><rect x="8" y="9" width="6.500" height="6.500" rx="1" fill="#dcdcdc" stroke="#b4b4b4"/></svg>
<div class="t d11" style="left:867.5px;top:327px;height:20px;line-height:20px;color:#838383">Zur Feldliste hinzufügen</div>
<div class="b " style="left:621px;top:369.5px;width:672px;height:409px;border:1px solid #dcdcdc"></div>
<div class="b " style="left:626px;top:363px;width:52px;height:12px;background:#f0f0f0"></div>
<div class="t d11 bd" style="left:628.5px;top:359.1px;height:20px;line-height:20px;letter-spacing:-.3px">Feldliste</div>
<div class="b " style="left:630px;top:385.5px;width:653.5px;height:358px;background:#fff;border:1px solid #828790"></div>
<div class="b " style="left:734.5px;top:388px;width:1px;height:23px;background:#e5e5e5"></div>
<div class="b " style="left:838.5px;top:388px;width:1px;height:23px;background:#e5e5e5"></div>
<div class="b " style="left:942.5px;top:388px;width:1px;height:23px;background:#e5e5e5"></div>
<div class="t d11" style="left:635px;top:389.5px;height:20px;line-height:20px;font-size:10.5px;letter-spacing:-.2px">Name</div>
<div class="t d11" style="left:739px;top:389.5px;height:20px;line-height:20px;font-size:10.5px;letter-spacing:-.2px">Typ</div>
<div class="t d11" style="left:843px;top:389.5px;height:20px;line-height:20px;font-size:10.5px;letter-spacing:-.2px">Länge</div>
<div class="t d11" style="left:947.5px;top:389.5px;height:20px;line-height:20px;font-size:10.5px;letter-spacing:-.2px">Genauigkeit</div>
<div class="t " style="left:634px;top:411.5px;height:20px;line-height:20px;">id</div>
<div class="t " style="left:737.5px;top:411.5px;height:20px;line-height:20px;">Integer</div>
<div class="t " style="left:842px;top:411.5px;height:20px;line-height:20px;">10</div>
<div class="b btnd" style="left:1187px;top:750px;width:90.5px;height:19.5px;"></div>
<svg class="ic" style="left:1192px;top:752px" width="15" height="16" viewBox="0 0 15 16"><rect x="1" y="1" width="4.500" height="14" fill="#d8d8d8" stroke="#b4b4b4"/><rect x="5.500" y="3" width="8" height="11" fill="#d4d4d4" stroke="#b9b9b9"/><rect x="8" y="9" width="6.500" height="6.500" rx="1" fill="#dcdcdc" stroke="#b4b4b4"/></svg>
<div class="t d11" style="left:1211px;top:750px;height:20px;line-height:20px;color:#838383">Feld löschen</div>
<div class="b btnd" style="left:1049.5px;top:786px;width:76.5px;height:22px;"></div>
<div class="t d11" style="left:1081px;top:787.5px;height:20px;line-height:20px;color:#838383">OK</div>
<div class="b btn" style="left:1133px;top:786px;width:76px;height:22px;"></div>
<div class="t d11" style="left:1145.5px;top:787.5px;height:20px;line-height:20px;">Abbrechen</div>
<div class="b btn" style="left:1216.5px;top:786px;width:76px;height:22px;"></div>
<div class="t d11" style="left:1244px;top:787.5px;height:20px;line-height:20px;">Hilfe</div>
<div class="b " style="left:712px;top:756px;width:89px;height:43.5px;background:#ffff80;border:1px solid #111;border-radius:10px"></div>
<div class="t " style="left:734.5px;top:768.6px;height:20px;line-height:20px;font-size:16px;font-weight:bold;color:#111">Bild 2</div>
<div class="b " style="left:790px;top:175.5px;width:503px;height:84px;background:#fff;border:1px solid #8a8a8a;box-shadow:2px 2px 3px rgba(0,0,0,.5)"></div>
<div class="b " style="left:791px;top:226px;width:501px;height:16px;background:#0078d7;outline:1px dotted rgba(10,30,70,.55);outline-offset:-1px"></div>
<div class="t d11" style="left:815px;top:174.8px;height:20px;line-height:20px;">Ohne Geometrie</div>
<div class="t d11" style="left:815px;top:191.3px;height:20px;line-height:20px;">Punkt</div>
<div class="t d11" style="left:815px;top:207.8px;height:20px;line-height:20px;">Multipunkt</div>
<div class="t d11" style="left:815px;top:224.8px;height:20px;line-height:20px;color:#fff;">Linie</div>
<div class="t d11" style="left:815px;top:241.3px;height:20px;line-height:20px;">Polygon</div>
<svg class="ic" style="left:794px;top:177px" width="15" height="15" viewBox="0 0 15 15"><rect x=".5" y=".5" width="14" height="14" rx="1.500" fill="#efefef" stroke="#8a8a8a"/><path d="M.5 3.500H14.500" stroke="#8a8a8a"/><path d="M3 6.500H5.500M7 6.500H12.500M3 9.500H5.500M7 9.500H12.500M3 12.500H5.500M7 12.500H12.500" stroke="#8a8a8a" stroke-width="1.200"/></svg>
<svg class="ic" style="left:794px;top:193.5px" width="15" height="15" viewBox="0 0 15 15"><circle cx="3.500" cy="5" r="1.500" fill="#a2a2a2"/><circle cx="11.500" cy="2" r="1.500" fill="#a2a2a2"/><circle cx="2" cy="12.500" r="1.500" fill="#a2a2a2"/></svg>
<svg class="ic" style="left:794px;top:210px" width="15" height="15" viewBox="0 0 15 15"><circle cx="3.500" cy="5" r="1.500" fill="#a2a2a2"/><circle cx="11.500" cy="2" r="1.500" fill="#a2a2a2"/><circle cx="2" cy="12.500" r="1.500" fill="#a2a2a2"/></svg>
<svg class="ic" style="left:794px;top:227px" width="15" height="15" viewBox="0 0 15 15"><path d="M1.500 2L6 13L11 2.500L13.500 2" fill="none" stroke="#6a8a9a" stroke-width="1"/><circle cx="1.500" cy="2" r="1" fill="#9ab"/><circle cx="11" cy="2.500" r="1" fill="#9ab"/><circle cx="13.500" cy="2" r="1" fill="#9ab"/></svg>
<svg class="ic" style="left:793px;top:244px" width="17" height="13" viewBox="0 0 17 13"><path d="M1.500 2.200C3 .6 6 1.200 8.500 2.600C11 1.200 14 .8 15.500 1.800C16.600 3.500 16.800 7 15.800 9.200C14.500 10.300 12 9.200 8.800 7.600C6.500 8.800 4.500 11 2.800 12C1.500 12.200 .6 11 .8 9C.6 6.500 .6 4 1.500 2.200Z" fill="#dedede" stroke="#8a8a8a" stroke-width="1.100"/></svg>
<svg class="ic" style="left:913px;top:235px" width="13" height="19" viewBox="0 0 13 19"><path d="M1 1V14.500L4.300 11.600L6.600 17.300L9 16.300L6.700 10.800H11Z" fill="#a018c8" stroke="#5a0a78" stroke-width="1" stroke-linejoin="round"/></svg>
</body></html>
